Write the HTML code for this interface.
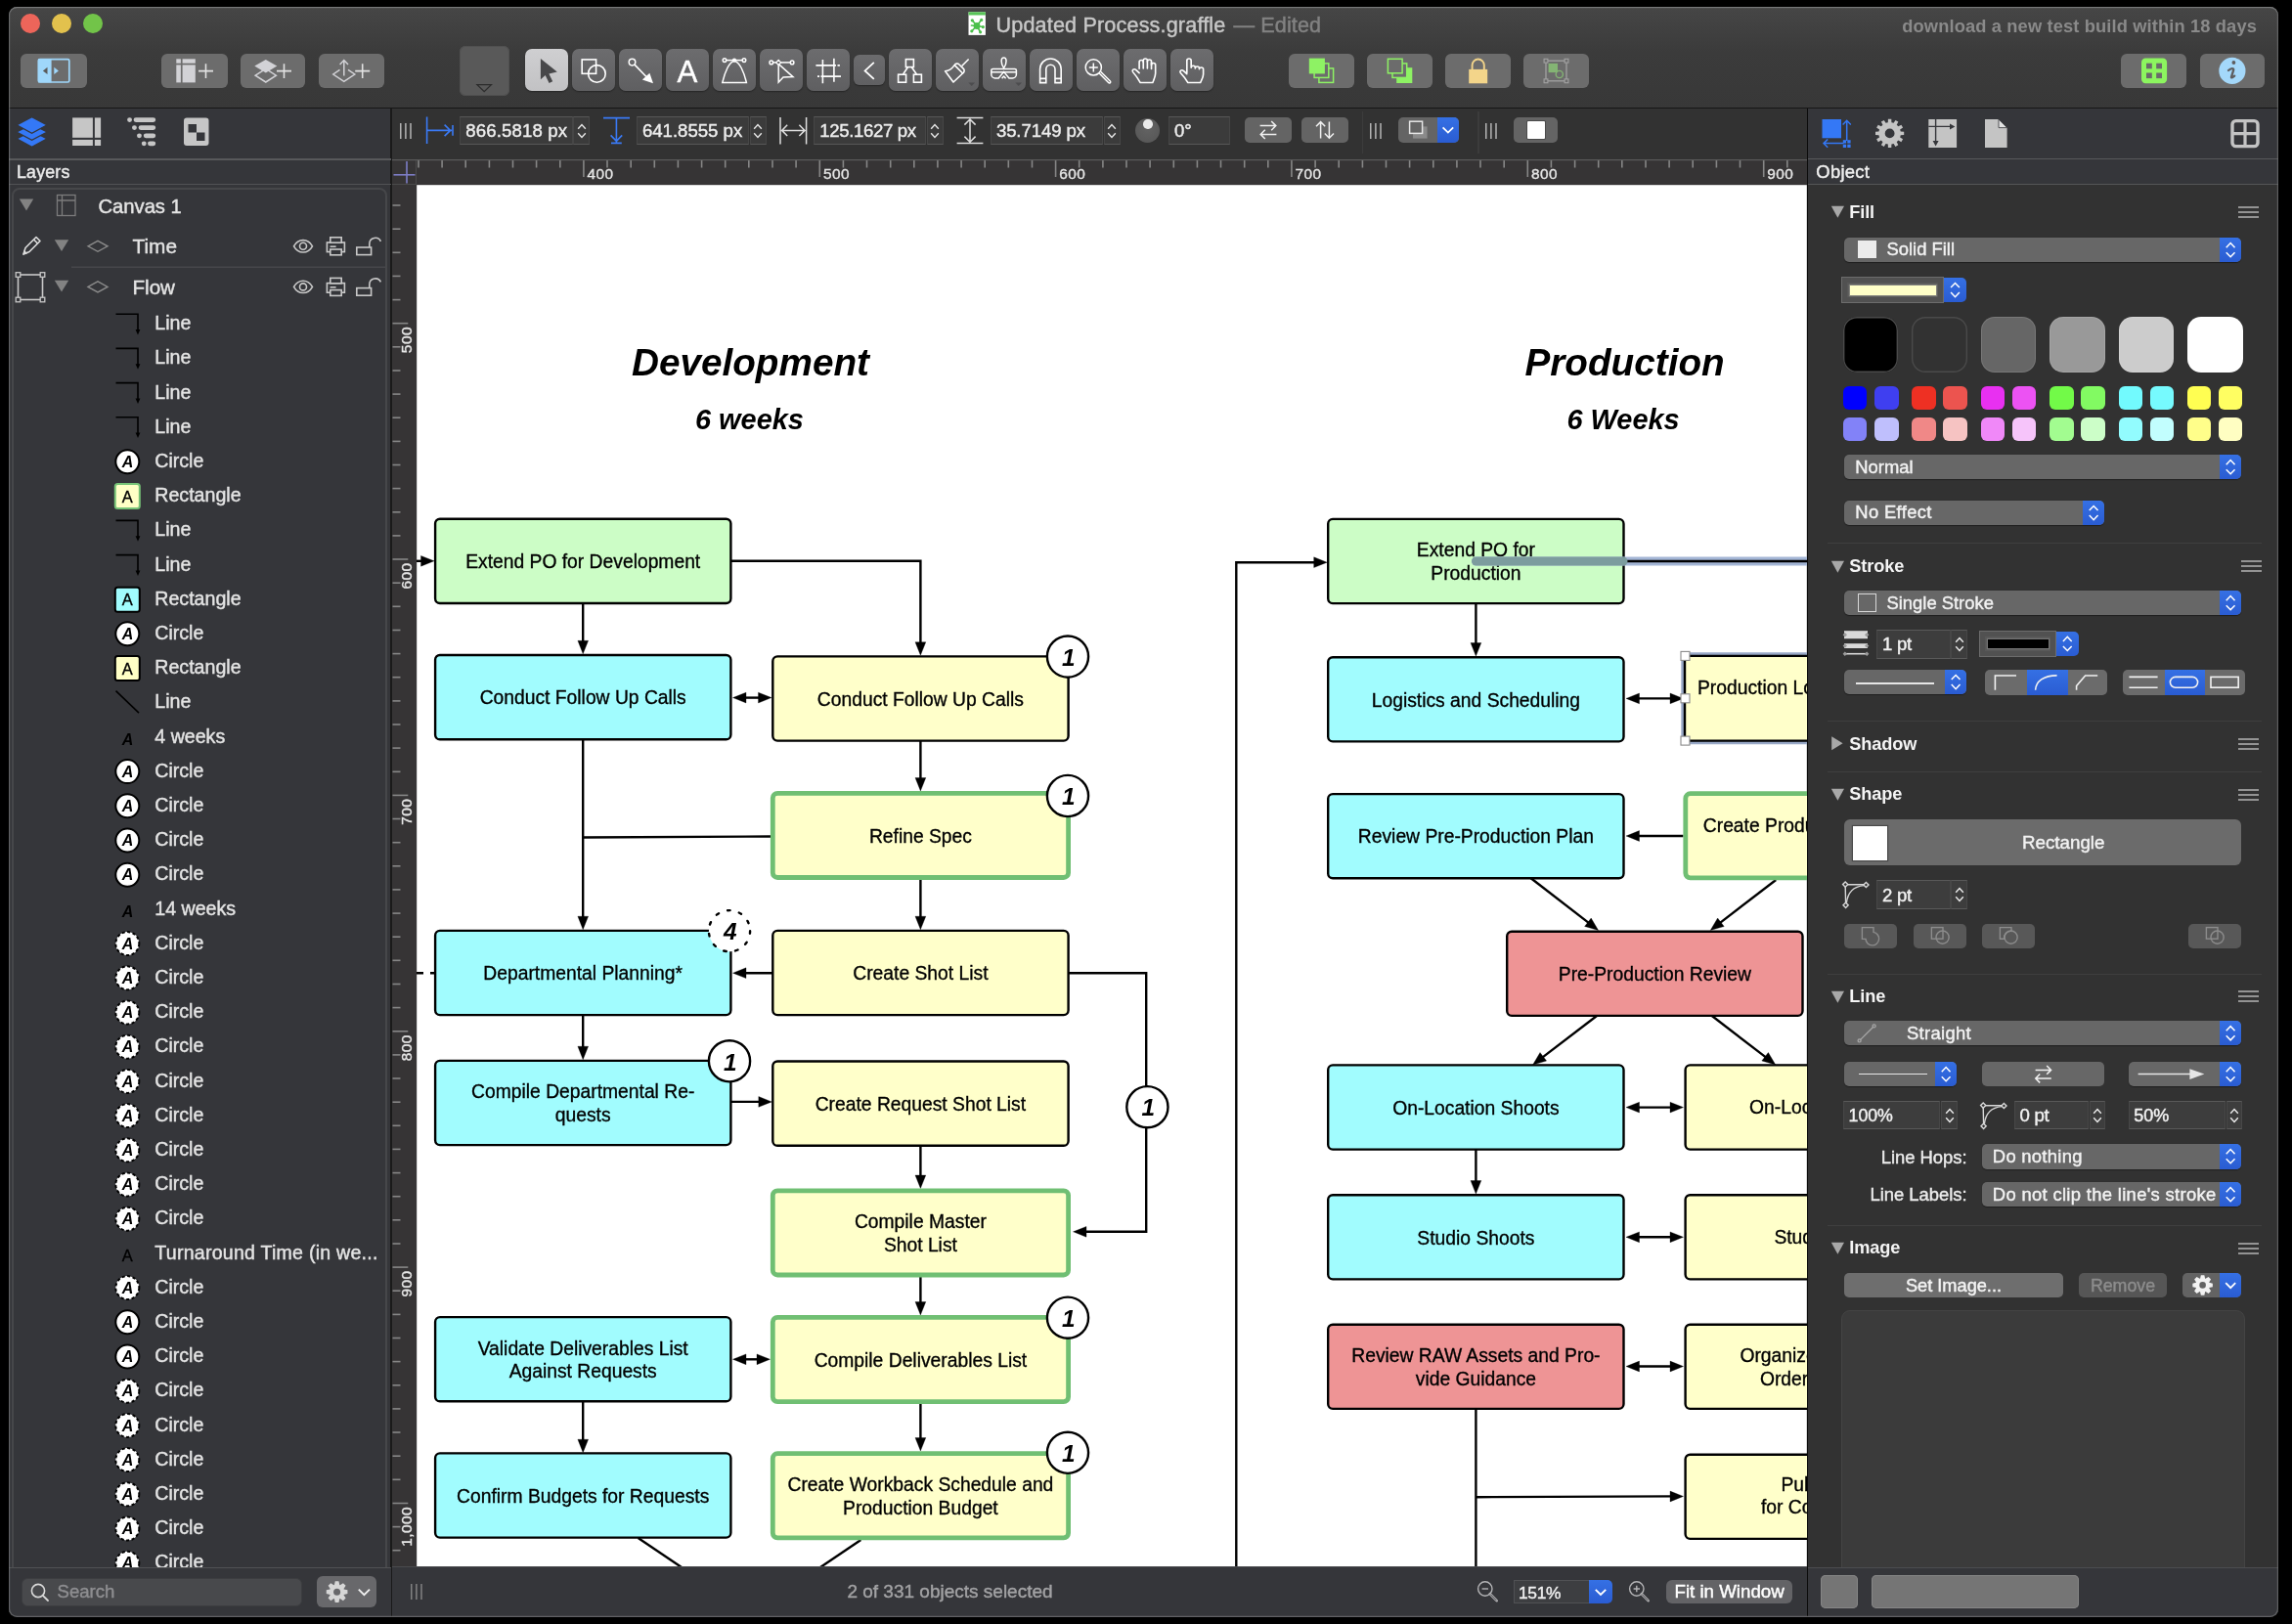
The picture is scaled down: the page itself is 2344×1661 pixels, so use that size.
<!DOCTYPE html><html><head><meta charset="utf-8"><title>Updated Process.graffle</title><style>html,body{margin:0;padding:0;background:#000;}body{width:2344px;height:1661px;position:relative;overflow:hidden;font-family:"Liberation Sans",sans-serif;}#win{position:absolute;left:9px;top:7px;width:2320.5px;height:1647px;border-radius:8.5px;overflow:hidden;background:#323232;}#in{position:absolute;left:-9px;top:-7px;width:2344px;height:1661px;will-change:transform;}#in div,#in svg{position:absolute;}#edge{position:absolute;left:9px;top:7px;width:2320.5px;height:1647px;border-radius:8.5px;box-shadow:inset 0 0 0 1.2px rgba(125,126,128,.6),inset 0 1px 0 0 rgba(150,150,150,.5);pointer-events:none}svg text{font-family:"Liberation Sans",sans-serif;}</style></head><body><div id="win"><div id="in"><svg style="left:426px;top:189px" width="1422" height="1414" viewBox="426 189 1422 1414" font-family="Liberation Sans, sans-serif" font-size="19.3" fill="#000" stroke="#000" stroke-width="0.32"><rect x="426" y="189" width="1422" height="1414" fill="#fff"/><text x="646" y="383.8" font-size="38.7" font-weight="bold" font-style="italic" stroke="none">Development</text><text x="711" y="438.8" font-size="28.9" font-weight="bold" font-style="italic" stroke="none">6 weeks</text><text x="1559.5" y="383.8" font-size="38.7" font-weight="bold" font-style="italic" stroke="none">Production</text><text x="1602.5" y="438.8" font-size="28.9" font-weight="bold" font-style="italic" stroke="none">6 Weeks</text><polyline points="420.0,573.8 436.0,573.8" fill="none" stroke="#000" stroke-width="2.4"/><polygon points="444.0,573.8 430.5,579.2 430.5,568.4" fill="#000"/><polyline points="596.2,617.5 596.2,660.8" fill="none" stroke="#000" stroke-width="2.4"/><polygon points="596.2,668.8 590.9,655.3 601.6,655.3" fill="#000"/><polyline points="748.0,573.8 941.4,573.8 941.4,662.2" fill="none" stroke="#000" stroke-width="2.4"/><polygon points="941.4,670.2 936.0,656.7 946.8,656.7" fill="#000"/><polyline points="757.5,713.6 781.0,713.6" fill="none" stroke="#000" stroke-width="2.4"/><polygon points="789.0,713.6 775.5,719.0 775.5,708.2" fill="#000"/><polygon points="749.5,713.6 763.0,708.2 763.0,719.0" fill="#000"/><polyline points="941.4,758.0 941.4,801.0" fill="none" stroke="#000" stroke-width="2.4"/><polygon points="941.4,809.0 936.0,795.5 946.8,795.5" fill="#000"/><polyline points="596.2,756.0 596.2,942.7" fill="none" stroke="#000" stroke-width="2.4"/><polygon points="596.2,950.7 590.9,937.2 601.6,937.2" fill="#000"/><polyline points="789.0,855.5 596.2,856.5" fill="none" stroke="#000" stroke-width="2.4"/><polyline points="941.4,899.0 941.4,942.7" fill="none" stroke="#000" stroke-width="2.4"/><polygon points="941.4,950.7 936.0,937.2 946.8,937.2" fill="#000"/><polyline points="790.0,995.2 757.5,995.2" fill="none" stroke="#000" stroke-width="2.4"/><polygon points="749.5,995.2 763.0,989.8 763.0,1000.6" fill="#000"/><polyline points="426.0,995.2 444.0,995.2" fill="none" stroke="#000" stroke-width="2.4" stroke-dasharray="7 7"/><polyline points="596.2,1038.0 596.2,1075.7" fill="none" stroke="#000" stroke-width="2.4"/><polygon points="596.2,1083.7 590.9,1070.2 601.6,1070.2" fill="#000"/><polyline points="748.0,1126.9 781.3,1126.9" fill="none" stroke="#000" stroke-width="2.4"/><polygon points="789.3,1126.9 775.8,1132.3 775.8,1121.5" fill="#000"/><polyline points="941.4,1170.0 941.4,1207.5" fill="none" stroke="#000" stroke-width="2.4"/><polygon points="941.4,1215.5 936.0,1202.0 946.8,1202.0" fill="#000"/><polyline points="1093.0,995.2 1172.2,995.2 1172.2,1259.8 1105.5,1259.8" fill="none" stroke="#000" stroke-width="2.4"/><polygon points="1097.5,1259.8 1111.0,1254.4 1111.0,1265.2" fill="#000"/><polyline points="941.4,1304.0 941.4,1337.0" fill="none" stroke="#000" stroke-width="2.4"/><polygon points="941.4,1345.0 936.0,1331.5 946.8,1331.5" fill="#000"/><polyline points="757.5,1390.3 779.5,1390.3" fill="none" stroke="#000" stroke-width="2.4"/><polygon points="787.5,1390.3 774.0,1395.7 774.0,1384.9" fill="#000"/><polygon points="749.5,1390.3 763.0,1384.9 763.0,1395.7" fill="#000"/><polyline points="596.2,1433.0 596.2,1477.7" fill="none" stroke="#000" stroke-width="2.4"/><polygon points="596.2,1485.7 590.9,1472.2 601.6,1472.2" fill="#000"/><polyline points="941.4,1435.0 941.4,1476.0" fill="none" stroke="#000" stroke-width="2.4"/><polygon points="941.4,1484.0 936.0,1470.5 946.8,1470.5" fill="#000"/><polyline points="652.6,1573.0 700.0,1605.0" fill="none" stroke="#000" stroke-width="2.4"/><polyline points="880.4,1575.0 836.0,1605.0" fill="none" stroke="#000" stroke-width="2.4"/><polyline points="1264.3,1605.0 1264.3,575.2 1349.2,575.2" fill="none" stroke="#000" stroke-width="2.4"/><polygon points="1357.2,575.2 1343.7,580.6 1343.7,569.8" fill="#000"/><polyline points="1509.4,617.0 1509.4,663.0" fill="none" stroke="#000" stroke-width="2.4"/><polygon points="1509.4,671.0 1504.0,657.5 1514.8,657.5" fill="#000"/><polyline points="1671.0,714.4 1713.5,714.4" fill="none" stroke="#000" stroke-width="2.4"/><polygon points="1721.5,714.4 1708.0,719.8 1708.0,709.0" fill="#000"/><polygon points="1663.0,714.4 1676.5,709.0 1676.5,719.8" fill="#000"/><polyline points="1721.5,855.0 1671.0,855.0" fill="none" stroke="#000" stroke-width="2.4"/><polygon points="1663.0,855.0 1676.5,849.6 1676.5,860.4" fill="#000"/><polyline points="1565.4,898.0 1628.3,946.6" fill="none" stroke="#000" stroke-width="2.4"/><polygon points="1634.6,951.5 1620.6,947.5 1627.2,939.0" fill="#000"/><polyline points="1816.2,900.0 1755.5,946.6" fill="none" stroke="#000" stroke-width="2.4"/><polygon points="1749.2,951.5 1756.6,939.0 1763.2,947.6" fill="#000"/><polyline points="1634.3,1038.0 1574.0,1084.1" fill="none" stroke="#000" stroke-width="2.4"/><polygon points="1567.6,1089.0 1575.0,1076.5 1581.6,1085.1" fill="#000"/><polyline points="1749.5,1038.0 1809.5,1084.1" fill="none" stroke="#000" stroke-width="2.4"/><polygon points="1815.8,1089.0 1801.8,1085.0 1808.4,1076.5" fill="#000"/><polyline points="1671.0,1132.6 1713.5,1132.6" fill="none" stroke="#000" stroke-width="2.4"/><polygon points="1721.5,1132.6 1708.0,1138.0 1708.0,1127.2" fill="#000"/><polygon points="1663.0,1132.6 1676.5,1127.2 1676.5,1138.0" fill="#000"/><polyline points="1509.4,1175.0 1509.4,1213.0" fill="none" stroke="#000" stroke-width="2.4"/><polygon points="1509.4,1221.0 1504.0,1207.5 1514.8,1207.5" fill="#000"/><polyline points="1671.0,1265.3 1713.5,1265.3" fill="none" stroke="#000" stroke-width="2.4"/><polygon points="1721.5,1265.3 1708.0,1270.7 1708.0,1259.9" fill="#000"/><polygon points="1663.0,1265.3 1676.5,1259.9 1676.5,1270.7" fill="#000"/><polyline points="1671.0,1397.5 1713.5,1397.5" fill="none" stroke="#000" stroke-width="2.4"/><polygon points="1721.5,1397.5 1708.0,1402.9 1708.0,1392.1" fill="#000"/><polygon points="1663.0,1397.5 1676.5,1392.1 1676.5,1402.9" fill="#000"/><polyline points="1509.4,1440.0 1509.4,1605.0" fill="none" stroke="#000" stroke-width="2.4"/><polyline points="1509.4,1531.2 1713.5,1530.4" fill="none" stroke="#000" stroke-width="2.4"/><polygon points="1721.5,1530.4 1708.0,1535.9 1708.0,1525.1" fill="#000"/><rect x="445.1" y="530.8" width="302.3" height="86.2" rx="4.8" fill="#ccfdc6" stroke="#000" stroke-width="2.4"/><text x="596.2" y="581.1" text-anchor="middle">Extend PO for Development</text><rect x="445.1" y="670.0" width="302.3" height="86.2" rx="4.8" fill="#a1fcfe" stroke="#000" stroke-width="2.4"/><text x="596.2" y="720.3" text-anchor="middle">Conduct Follow Up Calls</text><rect x="790.3" y="671.4" width="302.3" height="86.2" rx="4.8" fill="#ffffca" stroke="#000" stroke-width="2.4"/><text x="941.4" y="721.7" text-anchor="middle">Conduct Follow Up Calls</text><rect x="790.3" y="811.3" width="302.3" height="86.2" rx="4.8" fill="#ffffca" stroke="#70bf73" stroke-width="4.8"/><text x="941.4" y="861.6" text-anchor="middle">Refine Spec</text><rect x="445.1" y="951.9" width="302.3" height="86.2" rx="4.8" fill="#a1fcfe" stroke="#000" stroke-width="2.4"/><text x="596.2" y="1002.2" text-anchor="middle">Departmental Planning*</text><rect x="790.3" y="951.9" width="302.3" height="86.2" rx="4.8" fill="#ffffca" stroke="#000" stroke-width="2.4"/><text x="941.4" y="1002.2" text-anchor="middle">Create Shot List</text><rect x="445.1" y="1084.9" width="302.3" height="86.2" rx="4.8" fill="#a1fcfe" stroke="#000" stroke-width="2.4"/><text x="596.2" y="1123.4" text-anchor="middle">Compile Departmental Re-</text><text x="596.2" y="1147.0" text-anchor="middle">quests</text><rect x="790.3" y="1085.5" width="302.3" height="86.2" rx="4.8" fill="#ffffca" stroke="#000" stroke-width="2.4"/><text x="941.4" y="1135.8" text-anchor="middle">Create Request Shot List</text><rect x="790.3" y="1217.8" width="302.3" height="86.2" rx="4.8" fill="#ffffca" stroke="#70bf73" stroke-width="4.8"/><text x="941.4" y="1256.3" text-anchor="middle">Compile Master</text><text x="941.4" y="1279.9" text-anchor="middle">Shot List</text><rect x="445.1" y="1347.1" width="302.3" height="86.2" rx="4.8" fill="#a1fcfe" stroke="#000" stroke-width="2.4"/><text x="596.2" y="1385.6" text-anchor="middle">Validate Deliverables List</text><text x="596.2" y="1409.2" text-anchor="middle">Against Requests</text><rect x="790.3" y="1347.4" width="302.3" height="86.2" rx="4.8" fill="#ffffca" stroke="#70bf73" stroke-width="4.8"/><text x="941.4" y="1397.7" text-anchor="middle">Compile Deliverables List</text><rect x="445.1" y="1486.4" width="302.3" height="86.2" rx="4.8" fill="#a1fcfe" stroke="#000" stroke-width="2.4"/><text x="596.2" y="1536.7" text-anchor="middle">Confirm Budgets for Requests</text><rect x="790.3" y="1486.7" width="302.3" height="86.2" rx="4.8" fill="#ffffca" stroke="#70bf73" stroke-width="4.8"/><text x="941.4" y="1525.2" text-anchor="middle">Create Workback Schedule and</text><text x="941.4" y="1548.8" text-anchor="middle">Production Budget</text><rect x="1358.2" y="530.9" width="302.3" height="86.2" rx="4.8" fill="#ccfdc6" stroke="#000" stroke-width="2.4"/><text x="1509.4" y="569.4" text-anchor="middle">Extend PO for</text><text x="1509.4" y="593.0" text-anchor="middle">Production</text><rect x="1358.2" y="672.2" width="302.3" height="86.2" rx="4.8" fill="#a1fcfe" stroke="#000" stroke-width="2.4"/><text x="1509.4" y="722.5" text-anchor="middle">Logistics and Scheduling</text><rect x="1358.2" y="812.1" width="302.3" height="86.2" rx="4.8" fill="#a1fcfe" stroke="#000" stroke-width="2.4"/><text x="1509.4" y="862.4" text-anchor="middle">Review Pre-Production Plan</text><rect x="1541.2" y="952.7" width="302.3" height="86.2" rx="4.8" fill="#ee9495" stroke="#000" stroke-width="2.4"/><text x="1692.4" y="1003.0" text-anchor="middle">Pre-Production Review</text><rect x="1358.2" y="1089.4" width="302.3" height="86.2" rx="4.8" fill="#a1fcfe" stroke="#000" stroke-width="2.4"/><text x="1509.4" y="1139.7" text-anchor="middle">On-Location Shoots</text><rect x="1358.2" y="1222.2" width="302.3" height="86.2" rx="4.8" fill="#a1fcfe" stroke="#000" stroke-width="2.4"/><text x="1509.4" y="1272.5" text-anchor="middle">Studio Shoots</text><rect x="1358.2" y="1354.7" width="302.3" height="86.2" rx="4.8" fill="#ee9495" stroke="#000" stroke-width="2.4"/><text x="1509.4" y="1393.2" text-anchor="middle">Review RAW Assets and Pro-</text><text x="1509.4" y="1416.8" text-anchor="middle">vide Guidance</text><rect x="1723.0" y="670.9" width="302.3" height="86.7" rx="4.8" fill="none" stroke="#98a8c6" stroke-width="7.4"/><rect x="1723.0" y="670.9" width="302.3" height="86.7" rx="4.8" fill="#ffffca" stroke="#000" stroke-width="2.4"/><text x="1736" y="710.3">Production Logistics and</text><rect x="1723.8" y="811.7" width="302.3" height="86.2" rx="4.8" fill="#ffffca" stroke="#70bf73" stroke-width="4.8"/><text x="1741.8" y="850.6">Create Production Plan and</text><rect x="1723.6" y="1089.4" width="302.3" height="86.2" rx="4.8" fill="#ffffca" stroke="#000" stroke-width="2.4"/><text x="1789.1" y="1139.2">On-Location</text><rect x="1723.6" y="1222.2" width="302.3" height="86.2" rx="4.8" fill="#ffffca" stroke="#000" stroke-width="2.4"/><text x="1814.4" y="1272.3">Studio</text><rect x="1723.6" y="1354.7" width="302.3" height="86.2" rx="4.8" fill="#ffffca" stroke="#000" stroke-width="2.4"/><text x="1779.4" y="1393.2">Organize</text><text x="1799.9" y="1417">Order</text><rect x="1723.6" y="1487.7" width="302.3" height="86.2" rx="4.8" fill="#ffffca" stroke="#000" stroke-width="2.4"/><text x="1821.4" y="1524.6">Pull</text><text x="1800.9" y="1548.4">for Co</text><circle cx="1092.0" cy="671.6" r="21.1" fill="#fff" stroke="#000" stroke-width="2.4"/><text x="1092.9" y="680.8" text-anchor="middle" font-size="24.4" font-weight="bold" font-style="italic" stroke="none">1</text><circle cx="1092.0" cy="814.0" r="21.1" fill="#fff" stroke="#000" stroke-width="2.4"/><text x="1092.9" y="823.2" text-anchor="middle" font-size="24.4" font-weight="bold" font-style="italic" stroke="none">1</text><circle cx="746.0" cy="952.2" r="21.1" fill="#fff" stroke="#000" stroke-width="2.4" stroke-dasharray="2.6 9.5" stroke-linecap="round"/><text x="746.9" y="961.4" text-anchor="middle" font-size="24.4" font-weight="bold" font-style="italic" stroke="none">4</text><circle cx="746.0" cy="1085.3" r="21.1" fill="#fff" stroke="#000" stroke-width="2.4"/><text x="746.9" y="1094.5" text-anchor="middle" font-size="24.4" font-weight="bold" font-style="italic" stroke="none">1</text><circle cx="1173.4" cy="1132.2" r="21.1" fill="#fff" stroke="#000" stroke-width="2.4"/><text x="1174.3" y="1141.4" text-anchor="middle" font-size="24.4" font-weight="bold" font-style="italic" stroke="none">1</text><circle cx="1092.0" cy="1347.7" r="21.1" fill="#fff" stroke="#000" stroke-width="2.4"/><text x="1092.9" y="1356.9" text-anchor="middle" font-size="24.4" font-weight="bold" font-style="italic" stroke="none">1</text><circle cx="1092.0" cy="1485.8" r="21.1" fill="#fff" stroke="#000" stroke-width="2.4"/><text x="1092.9" y="1495.0" text-anchor="middle" font-size="24.4" font-weight="bold" font-style="italic" stroke="none">1</text><line x1="1509.5" y1="574" x2="1850" y2="574" stroke="#a3b5d5" stroke-width="9" stroke-linecap="round"/><line x1="1662" y1="574" x2="1850" y2="574" stroke="#000" stroke-width="2.4"/><line x1="1509.5" y1="574" x2="1660" y2="574" stroke="#7c9c9e" stroke-width="9" stroke-linecap="round"/><rect x="1719.0" y="666.4" width="9" height="9" fill="#fff" stroke="#8a8a8a" stroke-width="1.1"/><rect x="1719.0" y="709.8" width="9" height="9" fill="#fff" stroke="#8a8a8a" stroke-width="1.1"/><rect x="1719.0" y="753.1" width="9" height="9" fill="#fff" stroke="#8a8a8a" stroke-width="1.1"/></svg><div style="left:401px;top:163px;width:1447px;height:26px;background:#363435;border-top:1px solid #5b5b5b;box-sizing:border-box"></div><div style="left:401px;top:189px;width:25px;height:1413px;background:#363435;"></div><svg style="left:0px;top:0px;font-family:Liberation Sans,sans-serif" width="2344" height="1661" viewBox="0 0 2344 1661"><rect x="427.2" y="164" width="1.6" height="7.5" fill="#868686"/><rect x="451.3" y="164" width="1.6" height="7.5" fill="#868686"/><rect x="475.4" y="164" width="1.6" height="7.5" fill="#868686"/><rect x="499.6" y="164" width="1.6" height="7.5" fill="#868686"/><rect x="523.7" y="164" width="1.6" height="7.5" fill="#868686"/><rect x="547.8" y="164" width="1.6" height="7.5" fill="#868686"/><rect x="572.0" y="164" width="1.6" height="7.5" fill="#868686"/><rect x="596.1" y="164" width="1.6" height="17" fill="#868686"/><text x="600.5" y="183.2" font-size="15.4" letter-spacing="0.45" fill="#e6e6e6" stroke="#e6e6e6" stroke-width="0.35">400</text><rect x="620.2" y="164" width="1.6" height="7.5" fill="#868686"/><rect x="644.4" y="164" width="1.6" height="7.5" fill="#868686"/><rect x="668.5" y="164" width="1.6" height="7.5" fill="#868686"/><rect x="692.6" y="164" width="1.6" height="7.5" fill="#868686"/><rect x="716.8" y="164" width="1.6" height="7.5" fill="#868686"/><rect x="740.9" y="164" width="1.6" height="7.5" fill="#868686"/><rect x="765.0" y="164" width="1.6" height="7.5" fill="#868686"/><rect x="789.2" y="164" width="1.6" height="7.5" fill="#868686"/><rect x="813.3" y="164" width="1.6" height="7.5" fill="#868686"/><rect x="837.5" y="164" width="1.6" height="17" fill="#868686"/><text x="841.9" y="183.2" font-size="15.4" letter-spacing="0.45" fill="#e6e6e6" stroke="#e6e6e6" stroke-width="0.35">500</text><rect x="861.6" y="164" width="1.6" height="7.5" fill="#868686"/><rect x="885.7" y="164" width="1.6" height="7.5" fill="#868686"/><rect x="909.9" y="164" width="1.6" height="7.5" fill="#868686"/><rect x="934.0" y="164" width="1.6" height="7.5" fill="#868686"/><rect x="958.1" y="164" width="1.6" height="7.5" fill="#868686"/><rect x="982.3" y="164" width="1.6" height="7.5" fill="#868686"/><rect x="1006.4" y="164" width="1.6" height="7.5" fill="#868686"/><rect x="1030.5" y="164" width="1.6" height="7.5" fill="#868686"/><rect x="1054.7" y="164" width="1.6" height="7.5" fill="#868686"/><rect x="1078.8" y="164" width="1.6" height="17" fill="#868686"/><text x="1083.2" y="183.2" font-size="15.4" letter-spacing="0.45" fill="#e6e6e6" stroke="#e6e6e6" stroke-width="0.35">600</text><rect x="1102.9" y="164" width="1.6" height="7.5" fill="#868686"/><rect x="1127.1" y="164" width="1.6" height="7.5" fill="#868686"/><rect x="1151.2" y="164" width="1.6" height="7.5" fill="#868686"/><rect x="1175.3" y="164" width="1.6" height="7.5" fill="#868686"/><rect x="1199.5" y="164" width="1.6" height="7.5" fill="#868686"/><rect x="1223.6" y="164" width="1.6" height="7.5" fill="#868686"/><rect x="1247.7" y="164" width="1.6" height="7.5" fill="#868686"/><rect x="1271.9" y="164" width="1.6" height="7.5" fill="#868686"/><rect x="1296.0" y="164" width="1.6" height="7.5" fill="#868686"/><rect x="1320.1" y="164" width="1.6" height="17" fill="#868686"/><text x="1324.5" y="183.2" font-size="15.4" letter-spacing="0.45" fill="#e6e6e6" stroke="#e6e6e6" stroke-width="0.35">700</text><rect x="1344.3" y="164" width="1.6" height="7.5" fill="#868686"/><rect x="1368.4" y="164" width="1.6" height="7.5" fill="#868686"/><rect x="1392.6" y="164" width="1.6" height="7.5" fill="#868686"/><rect x="1416.7" y="164" width="1.6" height="7.5" fill="#868686"/><rect x="1440.8" y="164" width="1.6" height="7.5" fill="#868686"/><rect x="1465.0" y="164" width="1.6" height="7.5" fill="#868686"/><rect x="1489.1" y="164" width="1.6" height="7.5" fill="#868686"/><rect x="1513.2" y="164" width="1.6" height="7.5" fill="#868686"/><rect x="1537.4" y="164" width="1.6" height="7.5" fill="#868686"/><rect x="1561.5" y="164" width="1.6" height="17" fill="#868686"/><text x="1565.9" y="183.2" font-size="15.4" letter-spacing="0.45" fill="#e6e6e6" stroke="#e6e6e6" stroke-width="0.35">800</text><rect x="1585.6" y="164" width="1.6" height="7.5" fill="#868686"/><rect x="1609.8" y="164" width="1.6" height="7.5" fill="#868686"/><rect x="1633.9" y="164" width="1.6" height="7.5" fill="#868686"/><rect x="1658.0" y="164" width="1.6" height="7.5" fill="#868686"/><rect x="1682.2" y="164" width="1.6" height="7.5" fill="#868686"/><rect x="1706.3" y="164" width="1.6" height="7.5" fill="#868686"/><rect x="1730.4" y="164" width="1.6" height="7.5" fill="#868686"/><rect x="1754.6" y="164" width="1.6" height="7.5" fill="#868686"/><rect x="1778.7" y="164" width="1.6" height="7.5" fill="#868686"/><rect x="1802.9" y="164" width="1.6" height="17" fill="#868686"/><text x="1807.2" y="183.2" font-size="15.4" letter-spacing="0.45" fill="#e6e6e6" stroke="#e6e6e6" stroke-width="0.35">900</text><rect x="1827.0" y="164" width="1.6" height="7.5" fill="#868686"/><rect x="401.5" y="209.2" width="8" height="1.6" fill="#868686"/><rect x="401.5" y="233.4" width="8" height="1.6" fill="#868686"/><rect x="401.5" y="257.5" width="8" height="1.6" fill="#868686"/><rect x="401.5" y="281.6" width="8" height="1.6" fill="#868686"/><rect x="401.5" y="305.8" width="8" height="1.6" fill="#868686"/><rect x="401.5" y="329.9" width="15.8" height="1.6" fill="#868686"/><text transform="translate(421,334.1) rotate(-90)" text-anchor="end" font-size="15.4" letter-spacing="0.45" fill="#e6e6e6" stroke="#e6e6e6" stroke-width="0.35">500</text><rect x="401.5" y="354.0" width="8" height="1.6" fill="#868686"/><rect x="401.5" y="378.2" width="8" height="1.6" fill="#868686"/><rect x="401.5" y="402.3" width="8" height="1.6" fill="#868686"/><rect x="401.5" y="426.4" width="8" height="1.6" fill="#868686"/><rect x="401.5" y="450.6" width="8" height="1.6" fill="#868686"/><rect x="401.5" y="474.7" width="8" height="1.6" fill="#868686"/><rect x="401.5" y="498.8" width="8" height="1.6" fill="#868686"/><rect x="401.5" y="523.0" width="8" height="1.6" fill="#868686"/><rect x="401.5" y="547.1" width="8" height="1.6" fill="#868686"/><rect x="401.5" y="571.2" width="15.8" height="1.6" fill="#868686"/><text transform="translate(421,575.4) rotate(-90)" text-anchor="end" font-size="15.4" letter-spacing="0.45" fill="#e6e6e6" stroke="#e6e6e6" stroke-width="0.35">600</text><rect x="401.5" y="595.4" width="8" height="1.6" fill="#868686"/><rect x="401.5" y="619.5" width="8" height="1.6" fill="#868686"/><rect x="401.5" y="643.7" width="8" height="1.6" fill="#868686"/><rect x="401.5" y="667.8" width="8" height="1.6" fill="#868686"/><rect x="401.5" y="691.9" width="8" height="1.6" fill="#868686"/><rect x="401.5" y="716.1" width="8" height="1.6" fill="#868686"/><rect x="401.5" y="740.2" width="8" height="1.6" fill="#868686"/><rect x="401.5" y="764.3" width="8" height="1.6" fill="#868686"/><rect x="401.5" y="788.5" width="8" height="1.6" fill="#868686"/><rect x="401.5" y="812.6" width="15.8" height="1.6" fill="#868686"/><text transform="translate(421,816.8) rotate(-90)" text-anchor="end" font-size="15.4" letter-spacing="0.45" fill="#e6e6e6" stroke="#e6e6e6" stroke-width="0.35">700</text><rect x="401.5" y="836.7" width="8" height="1.6" fill="#868686"/><rect x="401.5" y="860.9" width="8" height="1.6" fill="#868686"/><rect x="401.5" y="885.0" width="8" height="1.6" fill="#868686"/><rect x="401.5" y="909.1" width="8" height="1.6" fill="#868686"/><rect x="401.5" y="933.3" width="8" height="1.6" fill="#868686"/><rect x="401.5" y="957.4" width="8" height="1.6" fill="#868686"/><rect x="401.5" y="981.5" width="8" height="1.6" fill="#868686"/><rect x="401.5" y="1005.7" width="8" height="1.6" fill="#868686"/><rect x="401.5" y="1029.8" width="8" height="1.6" fill="#868686"/><rect x="401.5" y="1054.0" width="15.8" height="1.6" fill="#868686"/><text transform="translate(421,1058.2) rotate(-90)" text-anchor="end" font-size="15.4" letter-spacing="0.45" fill="#e6e6e6" stroke="#e6e6e6" stroke-width="0.35">800</text><rect x="401.5" y="1078.1" width="8" height="1.6" fill="#868686"/><rect x="401.5" y="1102.2" width="8" height="1.6" fill="#868686"/><rect x="401.5" y="1126.4" width="8" height="1.6" fill="#868686"/><rect x="401.5" y="1150.5" width="8" height="1.6" fill="#868686"/><rect x="401.5" y="1174.6" width="8" height="1.6" fill="#868686"/><rect x="401.5" y="1198.8" width="8" height="1.6" fill="#868686"/><rect x="401.5" y="1222.9" width="8" height="1.6" fill="#868686"/><rect x="401.5" y="1247.0" width="8" height="1.6" fill="#868686"/><rect x="401.5" y="1271.2" width="8" height="1.6" fill="#868686"/><rect x="401.5" y="1295.3" width="15.8" height="1.6" fill="#868686"/><text transform="translate(421,1299.5) rotate(-90)" text-anchor="end" font-size="15.4" letter-spacing="0.45" fill="#e6e6e6" stroke="#e6e6e6" stroke-width="0.35">900</text><rect x="401.5" y="1319.4" width="8" height="1.6" fill="#868686"/><rect x="401.5" y="1343.6" width="8" height="1.6" fill="#868686"/><rect x="401.5" y="1367.7" width="8" height="1.6" fill="#868686"/><rect x="401.5" y="1391.8" width="8" height="1.6" fill="#868686"/><rect x="401.5" y="1416.0" width="8" height="1.6" fill="#868686"/><rect x="401.5" y="1440.1" width="8" height="1.6" fill="#868686"/><rect x="401.5" y="1464.2" width="8" height="1.6" fill="#868686"/><rect x="401.5" y="1488.4" width="8" height="1.6" fill="#868686"/><rect x="401.5" y="1512.5" width="8" height="1.6" fill="#868686"/><rect x="401.5" y="1536.7" width="15.8" height="1.6" fill="#868686"/><text transform="translate(421,1540.9) rotate(-90)" text-anchor="end" font-size="15.4" letter-spacing="0.45" fill="#e6e6e6" stroke="#e6e6e6" stroke-width="0.35">1,000</text><rect x="401.5" y="1560.8" width="8" height="1.6" fill="#868686"/><rect x="401.5" y="1584.9" width="8" height="1.6" fill="#868686"/><rect x="401" y="163" width="25" height="26" fill="#363435"/><rect x="401" y="163" width="1447" height="1.2" fill="#5b5b5b"/><rect x="415.2" y="165" width="1.6" height="22.5" fill="#7d7dc6"/><rect x="402.5" y="178" width="22" height="1.6" fill="#7d7dc6"/><rect x="425" y="164" width="1" height="25" fill="#4a4a4a"/><rect x="401" y="188" width="25" height="1" fill="#4a4a4a"/></svg><div style="left:401px;top:111px;width:1447px;height:52px;background:#323232"></div><svg style="left:408.6px;top:125.8px;" width="12" height="16" viewBox="0 0 12 16"><path d="M0.8,0 V16 M5.9,0 V16 M11,0 V16" stroke="#c8c8c8" stroke-width="1.3"/></svg><svg style="left:434px;top:118px;" width="32" height="32" viewBox="0 0 32 32"><g fill="none" stroke="#3a7af5" stroke-width="1.6"><path d="M2.6,1.6 V29 M2.6,15.4 H28 M20.6,9.6 L26.6,15.4 L20.6,21.2 M29,10 V20.8"/></g></svg><div style="left:470.2px;top:119px;width:115.6px;height:29px;background:#3b3b3b;border:1px solid;border-color:#575757 #464646 #575757 #464646;box-sizing:border-box"></div><div style="left:586.3px;top:119px;width:17px;height:29px;background:#3b3b3b;border:1px solid;border-color:#575757 #464646 #575757 #464646;box-sizing:border-box"></div><svg style="left:588.85px;top:123.5px;" width="12" height="20" viewBox="0 0 12 20"><path d="M2.2,7.8 L6,3.6 L9.8,7.8 M2.2,12.2 L6,16.4 L9.8,12.2" fill="none" stroke="#e6e6e6" stroke-width="1.4"/></svg><div style="left:476.2px;top:125.00px;font-size:18.6px;line-height:18.6px;color:#ededed;white-space:nowrap;letter-spacing:0.15px;-webkit-text-stroke:0.42px">866.5818 px</div><svg style="left:615px;top:118px;" width="32" height="32" viewBox="0 0 32 32"><g fill="none" stroke="#3a7af5" stroke-width="1.6"><path d="M2,2.6 H29 M15.4,2.6 V27.4 M9.6,20.4 L15.4,26.4 L21.2,20.4 M10,28.4 H20.8"/></g></svg><div style="left:650.9px;top:119px;width:115.5px;height:29px;background:#3b3b3b;border:1px solid;border-color:#575757 #464646 #575757 #464646;box-sizing:border-box"></div><div style="left:766.9px;top:119px;width:17px;height:29px;background:#3b3b3b;border:1px solid;border-color:#575757 #464646 #575757 #464646;box-sizing:border-box"></div><svg style="left:769.45px;top:123.5px;" width="12" height="20" viewBox="0 0 12 20"><path d="M2.2,7.8 L6,3.6 L9.8,7.8 M2.2,12.2 L6,16.4 L9.8,12.2" fill="none" stroke="#e6e6e6" stroke-width="1.4"/></svg><div style="left:656.9px;top:125.00px;font-size:18.6px;line-height:18.6px;color:#ededed;white-space:nowrap;letter-spacing:0px;-webkit-text-stroke:0.42px">641.8555 px</div><svg style="left:795px;top:118px;" width="32" height="32" viewBox="0 0 32 32"><g fill="none" stroke="#dedede" stroke-width="1.5"><path d="M3,2 V29.5 M29.6,2 V29.5 M4.5,15.4 H28 M10.2,9.8 L4.6,15.4 L10.2,21 M22.4,9.8 L28,15.4 L22.4,21"/></g></svg><div style="left:832.2px;top:119px;width:115.2px;height:29px;background:#3b3b3b;border:1px solid;border-color:#575757 #464646 #575757 #464646;box-sizing:border-box"></div><div style="left:947.9px;top:119px;width:17px;height:29px;background:#3b3b3b;border:1px solid;border-color:#575757 #464646 #575757 #464646;box-sizing:border-box"></div><svg style="left:950.45px;top:123.5px;" width="12" height="20" viewBox="0 0 12 20"><path d="M2.2,7.8 L6,3.6 L9.8,7.8 M2.2,12.2 L6,16.4 L9.8,12.2" fill="none" stroke="#e6e6e6" stroke-width="1.4"/></svg><div style="left:838.2px;top:125.00px;font-size:18.6px;line-height:18.6px;color:#ededed;white-space:nowrap;letter-spacing:-0.36px;-webkit-text-stroke:0.42px">125.1627 px</div><svg style="left:976px;top:118px;" width="32" height="32" viewBox="0 0 32 32"><g fill="none" stroke="#dedede" stroke-width="1.5"><path d="M2.6,2.4 H29.4 M2.6,28.6 H29.4 M16,3.8 V27.2 M10.4,9.6 L16,4 L21.6,9.6 M10.4,21.6 L16,27.2 L21.6,21.6"/></g></svg><div style="left:1012.9px;top:119px;width:115.5px;height:29px;background:#3b3b3b;border:1px solid;border-color:#575757 #464646 #575757 #464646;box-sizing:border-box"></div><div style="left:1128.9px;top:119px;width:17px;height:29px;background:#3b3b3b;border:1px solid;border-color:#575757 #464646 #575757 #464646;box-sizing:border-box"></div><svg style="left:1131.45px;top:123.5px;" width="12" height="20" viewBox="0 0 12 20"><path d="M2.2,7.8 L6,3.6 L9.8,7.8 M2.2,12.2 L6,16.4 L9.8,12.2" fill="none" stroke="#e6e6e6" stroke-width="1.4"/></svg><div style="left:1018.9px;top:125.00px;font-size:18.6px;line-height:18.6px;color:#ededed;white-space:nowrap;letter-spacing:-0.1px;-webkit-text-stroke:0.42px">35.7149 px</div><div style="left:1160.9px;top:120.7px;width:25.6px;height:25.6px;background:radial-gradient(circle at 50% 40%,#636363,#555);border-radius:50%"></div><div style="left:1169.2px;top:122.3px;width:9.4px;height:9.4px;background:#ececec;border-radius:50%"></div><div style="left:1194.9px;top:119px;width:63.3px;height:29px;background:#3b3b3b;border:1px solid;border-color:#575757 #464646 #575757 #464646;box-sizing:border-box"></div><div style="left:1200.9px;top:125.00px;font-size:18.6px;line-height:18.6px;color:#ededed;white-space:nowrap;letter-spacing:0px;-webkit-text-stroke:0.42px">0°</div><div style="left:1273px;top:120.3px;width:48px;height:25.7px;background:#646464;border-radius:5px"></div><svg style="left:1273px;top:120.3px;" width="48" height="25.7" viewBox="0 0 48 25.7"><g fill="none" stroke="#f0f0f0" stroke-width="1.5"><path d="M15.6,8.6 H31.8 M27.2,4 L31.8,8.6 L27.2,13.2 M32.4,17.4 H16.2 M20.8,12.8 L16.2,17.4 L20.8,22"/></g></svg><div style="left:1330.8px;top:120.3px;width:48px;height:25.7px;background:#646464;border-radius:5px"></div><svg style="left:1330.8px;top:120.3px;" width="48" height="25.7" viewBox="0 0 48 25.7"><g fill="none" stroke="#f0f0f0" stroke-width="1.5"><path d="M19.6,21.4 V4.6 M15,9.2 L19.6,4.6 L24.2,9.2 M28.4,4.4 V21.2 M23.8,16.6 L28.4,21.2 L33,16.6"/></g></svg><div style="left:1393.3px;top:114px;width:1.2px;height:43px;background:#3c3c3c"></div><svg style="left:1401px;top:125.8px;" width="12" height="16" viewBox="0 0 12 16"><path d="M0.8,0 V16 M5.9,0 V16 M11,0 V16" stroke="#c8c8c8" stroke-width="1.3"/></svg><div style="left:1430px;top:120.3px;width:62px;height:25.7px;background:#646464;border-radius:5px"></div><div style="left:1469.8px;top:120.3px;width:22.2px;height:25.7px;background:linear-gradient(#3570e4,#2a5cd2);border-radius:0 5px 5px 0"></div><svg style="left:1430px;top:120.3px;" width="62" height="25.7" viewBox="0 0 62 25.7"><rect x="15" y="9.4" width="14.6" height="12.2" fill="#8a8a8a"/><rect x="11.6" y="4.2" width="13" height="12.2" fill="#646464" stroke="#e6e6e6" stroke-width="1.5"/><path d="M45.6,10.4 L50.9,15.6 L56.2,10.4" fill="none" stroke="#fff" stroke-width="1.8"/></svg><div style="left:1511.4px;top:114px;width:1.2px;height:43px;background:#3c3c3c"></div><svg style="left:1519.4px;top:125.8px;" width="12" height="16" viewBox="0 0 12 16"><path d="M0.8,0 V16 M5.9,0 V16 M11,0 V16" stroke="#c8c8c8" stroke-width="1.3"/></svg><div style="left:1548px;top:119.8px;width:45px;height:25.8px;background:#646464;border-radius:5px"></div><div style="left:1562.3px;top:124px;width:18px;height:17.8px;background:#fff;box-shadow:0 0 0 1px #4a4a4a;border-radius:1px"></div><div style="left:401px;top:1602px;width:1447px;height:53px;background:#35363a;border-top:1px solid #4a4b4e;box-sizing:border-box"></div><svg style="left:419.6px;top:1620.4px;" width="12" height="16" viewBox="0 0 12 16"><path d="M0.8,0 V16 M5.9,0 V16 M11,0 V16" stroke="#8e8e8e" stroke-width="1.3"/></svg><div style="left:471.5px;width:1000px;text-align:center;top:1618.00px;font-size:19px;line-height:19px;color:#a2a2a4;white-space:nowrap;;-webkit-text-stroke:0.42px">2 of 331 objects selected</div><svg style="left:1508.6px;top:1616px;" width="24" height="24" viewBox="0 0 24 24"><circle cx="9.8" cy="9" r="7.2" fill="none" stroke="#b4b4b6" stroke-width="1.4"/><path d="M6.6,9 h6.4" stroke="#b4b4b6" stroke-width="1.4"/><path d="M14.8,14.2 L21.6,21.2" stroke="#b4b4b6" stroke-width="2.6" stroke-linecap="round"/><path d="M15.4,14.8 L21,20.6" stroke="#35363a" stroke-width="0.9" stroke-linecap="round"/></svg><div style="left:1548px;top:1615.7px;width:77.5px;height:24.5px;background:#3d3e41;border:1px solid #505154;box-sizing:border-box"></div><div style="left:1553px;top:1621.00px;font-size:17.4px;line-height:17.4px;color:#f0f0f0;white-space:nowrap;letter-spacing:-0.35px;-webkit-text-stroke:0.42px">151%</div><div style="left:1625.3px;top:1615.7px;width:23.8px;height:24.5px;background:linear-gradient(#3570e4,#2a5cd2);border-radius:0 5px 5px 0"></div><svg style="left:1625.3px;top:1615.7px;" width="23.8" height="24.5" viewBox="0 0 23.8 24.5"><path d="M6.8,9.8 L12,15 L17.2,9.8" fill="none" stroke="#fff" stroke-width="1.9"/></svg><svg style="left:1664.2px;top:1616px;" width="24" height="24" viewBox="0 0 24 24"><circle cx="9.8" cy="9" r="7.2" fill="none" stroke="#b4b4b6" stroke-width="1.4"/><path d="M6.6,9 h6.4 M9.8,5.8 v6.4" stroke="#b4b4b6" stroke-width="1.4"/><path d="M14.8,14.2 L21.6,21.2" stroke="#b4b4b6" stroke-width="2.6" stroke-linecap="round"/><path d="M15.4,14.8 L21,20.6" stroke="#35363a" stroke-width="0.9" stroke-linecap="round"/></svg><div style="left:1704.2px;top:1615.7px;width:128.8px;height:24.5px;background:#636366;border-radius:6px"></div><div style="left:1268.6px;width:1000px;text-align:center;top:1619.00px;font-size:18.7px;line-height:18.7px;color:#fff;white-space:nowrap;;-webkit-text-stroke:0.42px">Fit in Window</div><div style="left:9px;top:111px;width:391px;height:1543px;background:#35363a"></div><div style="left:399.3px;top:111px;width:1.7px;height:1542px;background:#1a1a1a"></div><div style="left:9px;top:162.2px;width:391px;height:1.5px;background:#58595b"></div><div style="left:9px;top:188px;width:391px;height:1.2px;background:#515254"></div><div style="left:12px;top:192.4px;width:384px;height:1420px;border:2.4px solid #46474a;border-radius:8px;box-sizing:border-box;"></div><div style="left:9px;top:1603px;width:391px;height:52px;background:#35363a;border-top:1.2px solid #515254;box-sizing:border-box"></div><div style="left:14px;top:194px;width:380px;height:1409px;overflow:hidden"><div style="left:-14px;top:-194px;width:400px;height:1661px"><svg style="left:0px;top:0px;font-family:Liberation Sans,sans-serif" width="400" height="1661" viewBox="0 0 400 1661"><g fill="#3478f6" stroke="#35363a" stroke-width="1.3"><path d="M17,141.9 L32.6,134 L48.2,141.9 L32.6,150.2z"/><path d="M17,135 L32.6,127.1 L48.2,135 L32.6,143.3z"/><path d="M17,127.8 L32.6,119.6 L48.2,127.8 L32.6,136.2z"/></g><g fill="#c6c6c6"><rect x="74.1" y="120.4" width="20.8" height="20.4"/><rect x="96.9" y="120.4" width="6.2" height="20.4"/><rect x="74.1" y="142.9" width="20.8" height="6.1"/><rect x="96.9" y="142.9" width="6.2" height="6.1"/></g><g fill="none" stroke="#c6c6c6" stroke-width="4.8" stroke-linecap="round"><path d="M132.5,122.6 h0.1 M139,122.6 h17.8 M137.4,130.6 h0.1 M144,130.6 h12.8 M142.4,138.8 h0.1 M149.2,138.8 h7.6 M147.2,146.8 h0.1 M153.4,146.8 h3.4"/></g><rect x="188" y="120.5" width="25.5" height="28.5" rx="3" fill="#c6c6c6"/><rect x="192.5" y="127" width="8.5" height="8.5" fill="#35363a"/><rect x="201" y="135.5" width="8.5" height="8.5" fill="#35363a"/><path d="M19.8,203.6 h14.4 l-7.2,11.9z" fill="#828282"/><g fill="none" stroke="#7c7c7c" stroke-width="1.3"><rect x="58.5" y="199.5" width="18.5" height="21"/><path d="M58.5,205 h18.5 M63.5,199.5 v21"/></g><g fill="none" stroke="#dcdcdc" stroke-width="1.6" stroke-linejoin="round"><path d="M24,260 l2,-6.5 l11,-11 l4,4 l-11,11z"/><path d="M34.5,245 l4,4"/></g><path d="M23.2,260.8 l1.6,-5 l3.4,3.4z" fill="#dcdcdc"/><path d="M55.8,245.2 h14.4 l-7.2,11.9z" fill="#828282"/><path d="M55.8,286.7 h14.4 l-7.2,11.9z" fill="#828282"/><path d="M90,251.8 l10,-5.5 l10,5.5 l-10,5.5z" fill="none" stroke="#8a8a8a" stroke-width="1.4"/><path d="M300.5,251.8 C305.0,243.60000000000002 315.0,243.60000000000002 319.5,251.8 C315.0,260.0 305.0,260.0 300.5,251.8z" fill="none" stroke="#c8c8c8" stroke-width="1.6"/><circle cx="310.0" cy="251.8" r="3.5" fill="none" stroke="#c8c8c8" stroke-width="1.6"/><g fill="none" stroke="#c8c8c8" stroke-width="1.6"><rect x="334.40000000000003" y="248.0" width="18" height="9.6"/><rect x="337.8" y="242.8" width="11.4" height="5.4" fill="#35363a"/><rect x="337.8" y="255.0" width="11.4" height="5.8" fill="#35363a"/><path d="M337.6,252.20000000000002 h6"/></g><g fill="none" stroke="#c8c8c8" stroke-width="1.6"><rect x="364.8" y="253.0" width="14.8" height="7.6"/><path d="M377.8,253.0 v-3.6 a6.1,6.1 0 0 1 11.6,-2.6"/></g><path d="M90,293.4 l10,-5.5 l10,5.5 l-10,5.5z" fill="none" stroke="#8a8a8a" stroke-width="1.4"/><path d="M300.5,293.4 C305.0,285.2 315.0,285.2 319.5,293.4 C315.0,301.59999999999997 305.0,301.59999999999997 300.5,293.4z" fill="none" stroke="#c8c8c8" stroke-width="1.6"/><circle cx="310.0" cy="293.4" r="3.5" fill="none" stroke="#c8c8c8" stroke-width="1.6"/><g fill="none" stroke="#c8c8c8" stroke-width="1.6"><rect x="334.40000000000003" y="289.59999999999997" width="18" height="9.6"/><rect x="337.8" y="284.4" width="11.4" height="5.4" fill="#35363a"/><rect x="337.8" y="296.59999999999997" width="11.4" height="5.8" fill="#35363a"/><path d="M337.6,293.79999999999995 h6"/></g><g fill="none" stroke="#c8c8c8" stroke-width="1.6"><rect x="364.8" y="294.59999999999997" width="14.8" height="7.6"/><path d="M377.8,294.59999999999997 v-3.6 a6.1,6.1 0 0 1 11.6,-2.6"/></g><g fill="none" stroke="#c8c8c8" stroke-width="1.6"><rect x="18.5" y="281" width="25" height="25.5"/></g><rect x="16.2" y="278.7" width="4.6" height="4.6" fill="#35363a" stroke="#c8c8c8" stroke-width="1.3"/><rect x="41.2" y="278.7" width="4.6" height="4.6" fill="#35363a" stroke="#c8c8c8" stroke-width="1.3"/><rect x="16.2" y="304.2" width="4.6" height="4.6" fill="#35363a" stroke="#c8c8c8" stroke-width="1.3"/><rect x="41.2" y="304.2" width="4.6" height="4.6" fill="#35363a" stroke="#c8c8c8" stroke-width="1.3"/><rect x="73" y="272.6" width="321" height="1.2" fill="#4c4d50"/><path d="M118.5,321.2 H141 V338.5" fill="none" stroke="#000" stroke-width="1.6"/><path d="M138.6,337.0 h4.8 l-2.4,5.5z" fill="#000"/><path d="M118.5,356.4 H141 V373.7" fill="none" stroke="#000" stroke-width="1.6"/><path d="M138.6,372.2 h4.8 l-2.4,5.5z" fill="#000"/><path d="M118.5,391.6 H141 V408.9" fill="none" stroke="#000" stroke-width="1.6"/><path d="M138.6,407.4 h4.8 l-2.4,5.5z" fill="#000"/><path d="M118.5,426.8 H141 V444.1" fill="none" stroke="#000" stroke-width="1.6"/><path d="M138.6,442.6 h4.8 l-2.4,5.5z" fill="#000"/><circle cx="130.3" cy="472.3" r="12" fill="#fff" stroke="#000" stroke-width="2"/><text x="130.6" y="477.9" text-anchor="middle" font-size="16" font-weight="bold" font-style="italic" fill="#000">A</text><rect x="117.8" y="495.1" width="25" height="25" rx="2.5" fill="#ffffc6" stroke="#77c477" stroke-width="2"/><text x="130.3" y="513.8" text-anchor="middle" font-size="16.4" fill="#000" stroke="#000" stroke-width="0.35">A</text><path d="M118.5,532.4 H141 V549.7" fill="none" stroke="#000" stroke-width="1.6"/><path d="M138.6,548.2 h4.8 l-2.4,5.5z" fill="#000"/><path d="M118.5,567.6 H141 V584.9" fill="none" stroke="#000" stroke-width="1.6"/><path d="M138.6,583.4 h4.8 l-2.4,5.5z" fill="#000"/><rect x="117.8" y="600.7" width="25" height="25" rx="2.5" fill="#a1fcfe" stroke="#000" stroke-width="2"/><text x="130.3" y="619.4" text-anchor="middle" font-size="16.4" fill="#000" stroke="#000" stroke-width="0.35">A</text><circle cx="130.3" cy="648.3" r="12" fill="#fff" stroke="#000" stroke-width="2"/><text x="130.6" y="653.9" text-anchor="middle" font-size="16" font-weight="bold" font-style="italic" fill="#000">A</text><rect x="117.8" y="671.1" width="25" height="25" rx="2.5" fill="#ffffc6" stroke="#000" stroke-width="2"/><text x="130.3" y="689.8" text-anchor="middle" font-size="16.4" fill="#000" stroke="#000" stroke-width="0.35">A</text><path d="M118.5,706.7 L142,729.2" fill="none" stroke="#000" stroke-width="1.6"/><text x="130.6" y="761.9" text-anchor="middle" font-size="16" font-weight="bold" font-style="italic" fill="#000">A</text><circle cx="130.3" cy="789.1" r="12" fill="#fff" stroke="#000" stroke-width="2"/><text x="130.6" y="794.7" text-anchor="middle" font-size="16" font-weight="bold" font-style="italic" fill="#000">A</text><circle cx="130.3" cy="824.3" r="12" fill="#fff" stroke="#000" stroke-width="2"/><text x="130.6" y="829.9" text-anchor="middle" font-size="16" font-weight="bold" font-style="italic" fill="#000">A</text><circle cx="130.3" cy="859.5" r="12" fill="#fff" stroke="#000" stroke-width="2"/><text x="130.6" y="865.1" text-anchor="middle" font-size="16" font-weight="bold" font-style="italic" fill="#000">A</text><circle cx="130.3" cy="894.7" r="12" fill="#fff" stroke="#000" stroke-width="2"/><text x="130.6" y="900.3" text-anchor="middle" font-size="16" font-weight="bold" font-style="italic" fill="#000">A</text><text x="130.6" y="937.9" text-anchor="middle" font-size="16" font-weight="bold" font-style="italic" fill="#000">A</text><circle cx="130.3" cy="965.1" r="12" fill="#fff" stroke="#000" stroke-width="2" stroke-dasharray="3.2 2.4"/><text x="130.6" y="970.7" text-anchor="middle" font-size="16" font-weight="bold" font-style="italic" fill="#000">A</text><circle cx="130.3" cy="1000.3" r="12" fill="#fff" stroke="#000" stroke-width="2" stroke-dasharray="3.2 2.4"/><text x="130.6" y="1005.9" text-anchor="middle" font-size="16" font-weight="bold" font-style="italic" fill="#000">A</text><circle cx="130.3" cy="1035.5" r="12" fill="#fff" stroke="#000" stroke-width="2" stroke-dasharray="3.2 2.4"/><text x="130.6" y="1041.1" text-anchor="middle" font-size="16" font-weight="bold" font-style="italic" fill="#000">A</text><circle cx="130.3" cy="1070.7" r="12" fill="#fff" stroke="#000" stroke-width="2" stroke-dasharray="3.2 2.4"/><text x="130.6" y="1076.3" text-anchor="middle" font-size="16" font-weight="bold" font-style="italic" fill="#000">A</text><circle cx="130.3" cy="1105.9" r="12" fill="#fff" stroke="#000" stroke-width="2" stroke-dasharray="3.2 2.4"/><text x="130.6" y="1111.5" text-anchor="middle" font-size="16" font-weight="bold" font-style="italic" fill="#000">A</text><circle cx="130.3" cy="1141.1" r="12" fill="#fff" stroke="#000" stroke-width="2" stroke-dasharray="3.2 2.4"/><text x="130.6" y="1146.7" text-anchor="middle" font-size="16" font-weight="bold" font-style="italic" fill="#000">A</text><circle cx="130.3" cy="1176.3" r="12" fill="#fff" stroke="#000" stroke-width="2" stroke-dasharray="3.2 2.4"/><text x="130.6" y="1181.9" text-anchor="middle" font-size="16" font-weight="bold" font-style="italic" fill="#000">A</text><circle cx="130.3" cy="1211.5" r="12" fill="#fff" stroke="#000" stroke-width="2" stroke-dasharray="3.2 2.4"/><text x="130.6" y="1217.1" text-anchor="middle" font-size="16" font-weight="bold" font-style="italic" fill="#000">A</text><circle cx="130.3" cy="1246.7" r="12" fill="#fff" stroke="#000" stroke-width="2" stroke-dasharray="3.2 2.4"/><text x="130.6" y="1252.3" text-anchor="middle" font-size="16" font-weight="bold" font-style="italic" fill="#000">A</text><text x="130.3" y="1289.9" text-anchor="middle" font-size="16.4" fill="#000" stroke="#000" stroke-width="0.35">A</text><circle cx="130.3" cy="1317.1" r="12" fill="#fff" stroke="#000" stroke-width="2" stroke-dasharray="3.2 2.4"/><text x="130.6" y="1322.7" text-anchor="middle" font-size="16" font-weight="bold" font-style="italic" fill="#000">A</text><circle cx="130.3" cy="1352.3" r="12" fill="#fff" stroke="#000" stroke-width="2"/><text x="130.6" y="1357.9" text-anchor="middle" font-size="16" font-weight="bold" font-style="italic" fill="#000">A</text><circle cx="130.3" cy="1387.5" r="12" fill="#fff" stroke="#000" stroke-width="2"/><text x="130.6" y="1393.1" text-anchor="middle" font-size="16" font-weight="bold" font-style="italic" fill="#000">A</text><circle cx="130.3" cy="1422.7" r="12" fill="#fff" stroke="#000" stroke-width="2" stroke-dasharray="3.2 2.4"/><text x="130.6" y="1428.3" text-anchor="middle" font-size="16" font-weight="bold" font-style="italic" fill="#000">A</text><circle cx="130.3" cy="1457.9" r="12" fill="#fff" stroke="#000" stroke-width="2" stroke-dasharray="3.2 2.4"/><text x="130.6" y="1463.5" text-anchor="middle" font-size="16" font-weight="bold" font-style="italic" fill="#000">A</text><circle cx="130.3" cy="1493.1" r="12" fill="#fff" stroke="#000" stroke-width="2" stroke-dasharray="3.2 2.4"/><text x="130.6" y="1498.7" text-anchor="middle" font-size="16" font-weight="bold" font-style="italic" fill="#000">A</text><circle cx="130.3" cy="1528.3" r="12" fill="#fff" stroke="#000" stroke-width="2" stroke-dasharray="3.2 2.4"/><text x="130.6" y="1533.9" text-anchor="middle" font-size="16" font-weight="bold" font-style="italic" fill="#000">A</text><circle cx="130.3" cy="1563.5" r="12" fill="#fff" stroke="#000" stroke-width="2" stroke-dasharray="3.2 2.4"/><text x="130.6" y="1569.1" text-anchor="middle" font-size="16" font-weight="bold" font-style="italic" fill="#000">A</text><circle cx="130.3" cy="1598.7" r="12" fill="#fff" stroke="#000" stroke-width="2" stroke-dasharray="3.2 2.4"/><text x="130.6" y="1604.3" text-anchor="middle" font-size="16" font-weight="bold" font-style="italic" fill="#000">A</text></svg><div style="left:100.5px;top:201.00px;font-size:20.2px;line-height:20.2px;color:#e4e4e4;white-space:nowrap;;-webkit-text-stroke:0.42px">Canvas 1</div><div style="left:135.5px;top:242.00px;font-size:20.8px;line-height:20.8px;color:#e4e4e4;white-space:nowrap;;-webkit-text-stroke:0.42px">Time</div><div style="left:135.5px;top:284.00px;font-size:20.6px;line-height:20.6px;color:#e4e4e4;white-space:nowrap;;-webkit-text-stroke:0.42px">Flow</div><div style="left:158.3px;top:321.00px;font-size:19.6px;line-height:19.6px;color:#e4e4e4;white-space:nowrap;;-webkit-text-stroke:0.42px">Line</div><div style="left:158.3px;top:356.00px;font-size:19.6px;line-height:19.6px;color:#e4e4e4;white-space:nowrap;;-webkit-text-stroke:0.42px">Line</div><div style="left:158.3px;top:392.00px;font-size:19.6px;line-height:19.6px;color:#e4e4e4;white-space:nowrap;;-webkit-text-stroke:0.42px">Line</div><div style="left:158.3px;top:427.00px;font-size:19.6px;line-height:19.6px;color:#e4e4e4;white-space:nowrap;;-webkit-text-stroke:0.42px">Line</div><div style="left:158.3px;top:462.00px;font-size:19.6px;line-height:19.6px;color:#e4e4e4;white-space:nowrap;;-webkit-text-stroke:0.42px">Circle</div><div style="left:158.3px;top:497.00px;font-size:19.6px;line-height:19.6px;color:#e4e4e4;white-space:nowrap;;-webkit-text-stroke:0.42px">Rectangle</div><div style="left:158.3px;top:532.00px;font-size:19.6px;line-height:19.6px;color:#e4e4e4;white-space:nowrap;;-webkit-text-stroke:0.42px">Line</div><div style="left:158.3px;top:568.00px;font-size:19.6px;line-height:19.6px;color:#e4e4e4;white-space:nowrap;;-webkit-text-stroke:0.42px">Line</div><div style="left:158.3px;top:603.00px;font-size:19.6px;line-height:19.6px;color:#e4e4e4;white-space:nowrap;;-webkit-text-stroke:0.42px">Rectangle</div><div style="left:158.3px;top:638.00px;font-size:19.6px;line-height:19.6px;color:#e4e4e4;white-space:nowrap;;-webkit-text-stroke:0.42px">Circle</div><div style="left:158.3px;top:673.00px;font-size:19.6px;line-height:19.6px;color:#e4e4e4;white-space:nowrap;;-webkit-text-stroke:0.42px">Rectangle</div><div style="left:158.3px;top:708.00px;font-size:19.6px;line-height:19.6px;color:#e4e4e4;white-space:nowrap;;-webkit-text-stroke:0.42px">Line</div><div style="left:158.3px;top:744.00px;font-size:19.6px;line-height:19.6px;color:#e4e4e4;white-space:nowrap;;-webkit-text-stroke:0.42px">4 weeks</div><div style="left:158.3px;top:779.00px;font-size:19.6px;line-height:19.6px;color:#e4e4e4;white-space:nowrap;;-webkit-text-stroke:0.42px">Circle</div><div style="left:158.3px;top:814.00px;font-size:19.6px;line-height:19.6px;color:#e4e4e4;white-space:nowrap;;-webkit-text-stroke:0.42px">Circle</div><div style="left:158.3px;top:849.00px;font-size:19.6px;line-height:19.6px;color:#e4e4e4;white-space:nowrap;;-webkit-text-stroke:0.42px">Circle</div><div style="left:158.3px;top:884.00px;font-size:19.6px;line-height:19.6px;color:#e4e4e4;white-space:nowrap;;-webkit-text-stroke:0.42px">Circle</div><div style="left:158.3px;top:920.00px;font-size:19.6px;line-height:19.6px;color:#e4e4e4;white-space:nowrap;;-webkit-text-stroke:0.42px">14 weeks</div><div style="left:158.3px;top:955.00px;font-size:19.6px;line-height:19.6px;color:#e4e4e4;white-space:nowrap;;-webkit-text-stroke:0.42px">Circle</div><div style="left:158.3px;top:990.00px;font-size:19.6px;line-height:19.6px;color:#e4e4e4;white-space:nowrap;;-webkit-text-stroke:0.42px">Circle</div><div style="left:158.3px;top:1025.00px;font-size:19.6px;line-height:19.6px;color:#e4e4e4;white-space:nowrap;;-webkit-text-stroke:0.42px">Circle</div><div style="left:158.3px;top:1060.00px;font-size:19.6px;line-height:19.6px;color:#e4e4e4;white-space:nowrap;;-webkit-text-stroke:0.42px">Circle</div><div style="left:158.3px;top:1096.00px;font-size:19.6px;line-height:19.6px;color:#e4e4e4;white-space:nowrap;;-webkit-text-stroke:0.42px">Circle</div><div style="left:158.3px;top:1131.00px;font-size:19.6px;line-height:19.6px;color:#e4e4e4;white-space:nowrap;;-webkit-text-stroke:0.42px">Circle</div><div style="left:158.3px;top:1166.00px;font-size:19.6px;line-height:19.6px;color:#e4e4e4;white-space:nowrap;;-webkit-text-stroke:0.42px">Circle</div><div style="left:158.3px;top:1201.00px;font-size:19.6px;line-height:19.6px;color:#e4e4e4;white-space:nowrap;;-webkit-text-stroke:0.42px">Circle</div><div style="left:158.3px;top:1236.00px;font-size:19.6px;line-height:19.6px;color:#e4e4e4;white-space:nowrap;;-webkit-text-stroke:0.42px">Circle</div><div style="left:158.3px;top:1272.00px;font-size:19.6px;line-height:19.6px;color:#e4e4e4;white-space:nowrap;letter-spacing:0.23px;-webkit-text-stroke:0.42px">Turnaround Time (in we...</div><div style="left:158.3px;top:1307.00px;font-size:19.6px;line-height:19.6px;color:#e4e4e4;white-space:nowrap;;-webkit-text-stroke:0.42px">Circle</div><div style="left:158.3px;top:1342.00px;font-size:19.6px;line-height:19.6px;color:#e4e4e4;white-space:nowrap;;-webkit-text-stroke:0.42px">Circle</div><div style="left:158.3px;top:1377.00px;font-size:19.6px;line-height:19.6px;color:#e4e4e4;white-space:nowrap;;-webkit-text-stroke:0.42px">Circle</div><div style="left:158.3px;top:1412.00px;font-size:19.6px;line-height:19.6px;color:#e4e4e4;white-space:nowrap;;-webkit-text-stroke:0.42px">Circle</div><div style="left:158.3px;top:1448.00px;font-size:19.6px;line-height:19.6px;color:#e4e4e4;white-space:nowrap;;-webkit-text-stroke:0.42px">Circle</div><div style="left:158.3px;top:1483.00px;font-size:19.6px;line-height:19.6px;color:#e4e4e4;white-space:nowrap;;-webkit-text-stroke:0.42px">Circle</div><div style="left:158.3px;top:1518.00px;font-size:19.6px;line-height:19.6px;color:#e4e4e4;white-space:nowrap;;-webkit-text-stroke:0.42px">Circle</div><div style="left:158.3px;top:1553.00px;font-size:19.6px;line-height:19.6px;color:#e4e4e4;white-space:nowrap;;-webkit-text-stroke:0.42px">Circle</div><div style="left:158.3px;top:1588.00px;font-size:19.6px;line-height:19.6px;color:#e4e4e4;white-space:nowrap;;-webkit-text-stroke:0.42px">Circle</div></div></div><svg style="left:0px;top:0px;font-family:Liberation Sans,sans-serif" width="400" height="192" viewBox="0 0 400 192"><g fill="#3478f6" stroke="#35363a" stroke-width="1.3"><path d="M17,141.9 L32.6,134 L48.2,141.9 L32.6,150.2z"/><path d="M17,135 L32.6,127.1 L48.2,135 L32.6,143.3z"/><path d="M17,127.8 L32.6,119.6 L48.2,127.8 L32.6,136.2z"/></g><g fill="#c6c6c6"><rect x="74.1" y="120.4" width="20.8" height="20.4"/><rect x="96.9" y="120.4" width="6.2" height="20.4"/><rect x="74.1" y="142.9" width="20.8" height="6.1"/><rect x="96.9" y="142.9" width="6.2" height="6.1"/></g><g fill="none" stroke="#c6c6c6" stroke-width="4.8" stroke-linecap="round"><path d="M132.5,122.6 h0.1 M139,122.6 h17.8 M137.4,130.6 h0.1 M144,130.6 h12.8 M142.4,138.8 h0.1 M149.2,138.8 h7.6 M147.2,146.8 h0.1 M153.4,146.8 h3.4"/></g><rect x="188" y="120.5" width="25.5" height="28.5" rx="3" fill="#c6c6c6"/><rect x="192.5" y="127" width="8.5" height="8.5" fill="#35363a"/><rect x="201" y="135.5" width="8.5" height="8.5" fill="#35363a"/></svg><div style="left:17px;top:168.00px;font-size:17.8px;line-height:17.8px;color:#ececec;white-space:nowrap;letter-spacing:0.2px;-webkit-text-stroke:0.42px">Layers</div><div style="left:22px;top:1613.5px;width:287px;height:29px;background:#48494c;border-radius:6px;border:1px solid #3c3d40;box-sizing:border-box"></div><svg style="left:30px;top:1618px;" width="24" height="22" viewBox="0 0 24 22"><circle cx="9" cy="9" r="6.6" fill="none" stroke="#d8d8d8" stroke-width="1.6"/><path d="M13.8,13.8 L19,19" stroke="#d8d8d8" stroke-width="1.8" stroke-linecap="round"/></svg><div style="left:58.5px;top:1619.00px;font-size:18.6px;line-height:18.6px;color:#8e8e91;white-space:nowrap;;-webkit-text-stroke:0.42px">Search</div><div style="left:324px;top:1612px;width:61px;height:32px;background:#68686b;border-radius:6px"></div><svg style="left:324px;top:1612px;" width="61" height="32" viewBox="324 1612 61 32"><polygon points="355.44,1626.34 355.44,1630.06 351.71,1630.88 351.52,1631.34 353.58,1634.55 350.95,1637.18 347.74,1635.12 347.28,1635.31 346.46,1639.04 342.74,1639.04 341.92,1635.31 341.46,1635.12 338.25,1637.18 335.62,1634.55 337.68,1631.34 337.49,1630.88 333.76,1630.06 333.76,1626.34 337.49,1625.52 337.68,1625.06 335.62,1621.85 338.25,1619.22 341.46,1621.28 341.92,1621.09 342.74,1617.36 346.46,1617.36 347.28,1621.09 347.74,1621.28 350.95,1619.22 353.58,1621.85 351.52,1625.06 351.71,1625.52" fill="#d6d6d6"/><circle cx="344.6" cy="1628.2" r="3.5" fill="#68686b"/><path d="M366.8,1625.6 L372.4,1631.2 L378,1625.6" fill="none" stroke="#f0f0f0" stroke-width="1.9"/></svg><div style="left:1848px;top:111px;width:482px;height:1543px;background:#323232"></div><div style="left:1848px;top:111px;width:481px;height:52px;background:#35363a"></div><div style="left:1848px;top:162.2px;width:482px;height:26.9px;background:#35363a;border-top:1.5px solid #58595b;border-bottom:1.3px solid #545557;box-sizing:border-box"></div><div style="left:1847.7px;top:111px;width:1.5px;height:1542px;background:#0c0c0c"></div><div style="left:1857.3px;top:167.00px;font-size:18.4px;line-height:18.4px;color:#f0f0f0;white-space:nowrap;letter-spacing:0.3px;-webkit-text-stroke:0.42px">Object</div><svg style="left:0px;top:0px;" width="2344" height="165" viewBox="0 0 2344 165"><rect x="1863.5" y="122" width="19.5" height="19.3" fill="#3478f6"/><g fill="none" stroke="#3478f6" stroke-width="1.5"><path d="M1888.7,144 V123.4 M1884.6,127.4 L1888.7,123.2 L1892.8,127.4"/><path d="M1885.5,146.6 H1865.2 M1869.2,142.5 L1865,146.6 L1869.2,150.7"/></g><g fill="#3478f6"><rect x="1884.8" y="143.2" width="3.3" height="3.3"/><rect x="1889.3" y="143.2" width="3.3" height="3.3"/><rect x="1884.8" y="147.7" width="3.3" height="3.3"/><rect x="1889.3" y="147.7" width="3.3" height="3.3"/></g><polygon points="1947.20,134.71 1947.20,138.09 1943.76,138.20 1943.16,140.42 1946.09,142.24 1944.40,145.16 1941.36,143.54 1939.74,145.16 1941.36,148.20 1938.44,149.89 1936.62,146.96 1934.40,147.56 1934.29,151.00 1930.91,151.00 1930.80,147.56 1928.58,146.96 1926.76,149.89 1923.84,148.20 1925.46,145.16 1923.84,143.54 1920.80,145.16 1919.11,142.24 1922.04,140.42 1921.44,138.20 1918.00,138.09 1918.00,134.71 1921.44,134.60 1922.04,132.38 1919.11,130.56 1920.80,127.64 1923.84,129.26 1925.46,127.64 1923.84,124.60 1926.76,122.91 1928.58,125.84 1930.80,125.24 1930.91,121.80 1934.29,121.80 1934.40,125.24 1936.62,125.84 1938.44,122.91 1941.36,124.60 1939.74,127.64 1941.36,129.26 1944.40,127.64 1946.09,130.56 1943.16,132.38 1943.76,134.60" fill="#c4c4c4"/><circle cx="1932.6" cy="136.4" r="4.9" fill="#35363a"/><rect x="1972.3" y="122" width="28.8" height="29" fill="#c4c4c4"/><g stroke="#35363a" stroke-width="1.4" fill="none"><path d="M1972.3,129.4 H1997 M1979.6,122 V147"/></g><path d="M1994,126.4 l5.4,3 l-5.4,3z M1976.6,144 l3,5.4 l3,-5.4z" fill="#35363a"/><path d="M2030,122 H2044 L2052.6,130.6 V151 H2030z" fill="#c4c4c4"/><path d="M2044,122 V130.6 H2052.6z" fill="#e2e2e2" stroke="#35363a" stroke-width="0.8"/><rect x="2283" y="123.6" width="26" height="26" rx="3.6" fill="none" stroke="#c4c4c4" stroke-width="3.4"/><path d="M2296,123.6 V149.6 M2283,136.6 H2309" stroke="#c4c4c4" stroke-width="3.2"/></svg><svg style="left:1871.5px;top:210.4px;" width="16" height="14" viewBox="0 0 16 14"><path d="M0.8,0.8 h13.2 l-6.6,12z" fill="#a8a8a8"/></svg><div style="left:1891.2px;top:208.00px;font-size:18.2px;line-height:18.2px;color:#f4f4f4;white-space:nowrap;font-weight:bold;letter-spacing:-0.1px">Fill</div><svg style="left:2289.3px;top:211.1px;" width="22" height="12" viewBox="0 0 22 12"><path d="M0,1 h21 M0,6 h21 M0,11 h21" stroke="#b4b4b4" stroke-width="1.3"/></svg><div style="left:1885.9px;top:242.5px;width:406.4px;height:25.1px;background:#676767;border-radius:5px;box-shadow:0 0.5px 1px rgba(0,0,0,.4)"></div><div style="left:2270px;top:242.5px;width:22.3px;height:25.1px;background:linear-gradient(#3570e4,#2a5cd2);border-radius:0 5px 5px 0"></div><svg style="left:2270px;top:242.5px;" width="22.3" height="25.1" viewBox="0 0 22.3 25.1"><path d="M6.75,10.150000000000011 l4.4,-4.6 l4.4,4.6 M6.75,15.150000000000011 l4.4,4.6 l4.4,-4.6" fill="none" stroke="#fff" stroke-width="1.5"/></svg><div style="left:1929.5px;top:246.00px;font-size:18.4px;line-height:18.4px;color:#f2f2f2;white-space:nowrap;letter-spacing:0px;-webkit-text-stroke:0.42px">Solid Fill</div><div style="left:1900px;top:245.6px;width:19.4px;height:18.8px;background:#ececec"></div><div style="left:1883px;top:283.2px;width:105px;height:26.4px;background:#585858;border:1px solid #6c6c6c;box-sizing:border-box;box-shadow:inset 0 0 0 5px #515151"></div><div style="left:1891.6px;top:292px;width:88px;height:9.6px;background:#ffffc8;box-shadow:0 0 0 1.2px #82827c"></div><div style="left:1988px;top:284px;width:23px;height:25px;background:linear-gradient(#3570e4,#2a5cd2);border-radius:0 5px 5px 0"></div><svg style="left:1988px;top:284px;" width="23" height="25" viewBox="0 0 23 25"><path d="M7.1,10.1 l4.4,-4.6 l4.4,4.6 M7.1,15.1 l4.4,4.6 l4.4,-4.6" fill="none" stroke="#fff" stroke-width="1.5"/></svg><div style="left:1884.8px;top:324.4px;width:56.6px;height:56.4px;background:#000;border-radius:14px;box-shadow:inset 0 0 0 1.4px #4a4a4a;"></div><div style="left:1955.25px;top:324.4px;width:56.6px;height:56.4px;background:#323232;border-radius:14px;box-shadow:inset 0 0 0 1.4px #4a4a4a;"></div><div style="left:2025.7px;top:324.4px;width:56.6px;height:56.4px;background:#666;border-radius:14px;box-shadow:inset 0 0 0 1px rgba(255,255,255,.12);"></div><div style="left:2096.15px;top:324.4px;width:56.6px;height:56.4px;background:#999;border-radius:14px;box-shadow:inset 0 0 0 1px rgba(255,255,255,.12);"></div><div style="left:2166.6px;top:324.4px;width:56.6px;height:56.4px;background:#ccc;border-radius:14px;box-shadow:inset 0 0 0 1px rgba(255,255,255,.12);"></div><div style="left:2237.05px;top:324.4px;width:56.6px;height:56.4px;background:#fff;border-radius:14px;"></div><div style="left:1885.1px;top:394.6px;width:24.4px;height:24.4px;background:#0000fe;border-radius:6px"></div><div style="left:1917.2px;top:394.6px;width:24.4px;height:24.4px;background:#3f3ff0;border-radius:6px"></div><div style="left:1955.3px;top:394.6px;width:24.4px;height:24.4px;background:#ee3023;border-radius:6px"></div><div style="left:1987.3px;top:394.6px;width:24.4px;height:24.4px;background:#ec544f;border-radius:6px"></div><div style="left:2025.8px;top:394.6px;width:24.4px;height:24.4px;background:#e830f1;border-radius:6px"></div><div style="left:2057.8px;top:394.6px;width:24.4px;height:24.4px;background:#ec52f3;border-radius:6px"></div><div style="left:2096.2px;top:394.6px;width:24.4px;height:24.4px;background:#72fa48;border-radius:6px"></div><div style="left:2128.2px;top:394.6px;width:24.4px;height:24.4px;background:#82fa62;border-radius:6px"></div><div style="left:2166.7px;top:394.6px;width:24.4px;height:24.4px;background:#72fafe;border-radius:6px"></div><div style="left:2198.7px;top:394.6px;width:24.4px;height:24.4px;background:#76fafe;border-radius:6px"></div><div style="left:2237.1px;top:394.6px;width:24.4px;height:24.4px;background:#fffe52;border-radius:6px"></div><div style="left:2269.1px;top:394.6px;width:24.4px;height:24.4px;background:#fffe62;border-radius:6px"></div><div style="left:1885.1px;top:426.6px;width:24.4px;height:24.4px;background:#8282f8;border-radius:6px"></div><div style="left:1917.2px;top:426.6px;width:24.4px;height:24.4px;background:#bfbffd;border-radius:6px"></div><div style="left:1955.3px;top:426.6px;width:24.4px;height:24.4px;background:#f08887;border-radius:6px"></div><div style="left:1987.3px;top:426.6px;width:24.4px;height:24.4px;background:#f6c3c2;border-radius:6px"></div><div style="left:2025.8px;top:426.6px;width:24.4px;height:24.4px;background:#f088f8;border-radius:6px"></div><div style="left:2057.8px;top:426.6px;width:24.4px;height:24.4px;background:#f6c4fa;border-radius:6px"></div><div style="left:2096.2px;top:426.6px;width:24.4px;height:24.4px;background:#a2fc90;border-radius:6px"></div><div style="left:2128.2px;top:426.6px;width:24.4px;height:24.4px;background:#ccfec8;border-radius:6px"></div><div style="left:2166.7px;top:426.6px;width:24.4px;height:24.4px;background:#92fcfe;border-radius:6px"></div><div style="left:2198.7px;top:426.6px;width:24.4px;height:24.4px;background:#c2fefe;border-radius:6px"></div><div style="left:2237.1px;top:426.6px;width:24.4px;height:24.4px;background:#fffe8a;border-radius:6px"></div><div style="left:2269.1px;top:426.6px;width:24.4px;height:24.4px;background:#fffec2;border-radius:6px"></div><div style="left:1885.9px;top:464.8px;width:406.4px;height:25.2px;background:#676767;border-radius:5px;box-shadow:0 0.5px 1px rgba(0,0,0,.4)"></div><div style="left:2270px;top:464.8px;width:22.3px;height:25.2px;background:linear-gradient(#3570e4,#2a5cd2);border-radius:0 5px 5px 0"></div><svg style="left:2270px;top:464.8px;" width="22.3" height="25.2" viewBox="0 0 22.3 25.2"><path d="M6.75,10.199999999999994 l4.4,-4.6 l4.4,4.6 M6.75,15.199999999999994 l4.4,4.6 l4.4,-4.6" fill="none" stroke="#fff" stroke-width="1.5"/></svg><div style="left:1897.3px;top:469.00px;font-size:18.4px;line-height:18.4px;color:#f2f2f2;white-space:nowrap;letter-spacing:0px;-webkit-text-stroke:0.42px">Normal</div><div style="left:1885.9px;top:511.6px;width:266.1px;height:25px;background:#676767;border-radius:5px;box-shadow:0 0.5px 1px rgba(0,0,0,.4)"></div><div style="left:2129.7px;top:511.6px;width:22.3px;height:25px;background:linear-gradient(#3570e4,#2a5cd2);border-radius:0 5px 5px 0"></div><svg style="left:2129.7px;top:511.6px;" width="22.3" height="25" viewBox="0 0 22.3 25"><path d="M6.75,10.1 l4.4,-4.6 l4.4,4.6 M6.75,15.1 l4.4,4.6 l4.4,-4.6" fill="none" stroke="#fff" stroke-width="1.5"/></svg><div style="left:1897.3px;top:515.00px;font-size:18.4px;line-height:18.4px;color:#f2f2f2;white-space:nowrap;letter-spacing:0.35px;-webkit-text-stroke:0.42px">No Effect</div><div style="left:1868.6px;top:554.8px;width:444.6px;height:1.2px;background:#3f3f3f"></div><svg style="left:1871.5px;top:572.6px;" width="16" height="14" viewBox="0 0 16 14"><path d="M0.8,0.8 h13.2 l-6.6,12z" fill="#a8a8a8"/></svg><div style="left:1891.2px;top:570.00px;font-size:18.2px;line-height:18.2px;color:#f4f4f4;white-space:nowrap;font-weight:bold;letter-spacing:-0.1px">Stroke</div><svg style="left:2292.3px;top:573.3px;" width="22" height="12" viewBox="0 0 22 12"><path d="M0,1 h21 M0,6 h21 M0,11 h21" stroke="#b4b4b4" stroke-width="1.3"/></svg><div style="left:1885.9px;top:604px;width:406.4px;height:25.2px;background:#676767;border-radius:5px;box-shadow:0 0.5px 1px rgba(0,0,0,.4)"></div><div style="left:2270px;top:604px;width:22.3px;height:25.2px;background:linear-gradient(#3570e4,#2a5cd2);border-radius:0 5px 5px 0"></div><svg style="left:2270px;top:604px;" width="22.3" height="25.2" viewBox="0 0 22.3 25.2"><path d="M6.75,10.200000000000022 l4.4,-4.6 l4.4,4.6 M6.75,15.200000000000022 l4.4,4.6 l4.4,-4.6" fill="none" stroke="#fff" stroke-width="1.5"/></svg><div style="left:1929.5px;top:608.00px;font-size:18.4px;line-height:18.4px;color:#f2f2f2;white-space:nowrap;letter-spacing:0px;-webkit-text-stroke:0.42px">Single Stroke</div><div style="left:1900.4px;top:607.4px;width:18.6px;height:18.4px;border:1.3px solid #d8d8d8;box-sizing:border-box"></div><svg style="left:1884px;top:644px;" width="28" height="28" viewBox="0 0 28 28"><g fill="#dadada"><rect x="2" y="1.2" width="24" height="8"/><rect x="2" y="14.2" width="24" height="4.8"/><rect x="2" y="23.9" width="24" height="1.6"/></g><g fill="#9c9c9c"><path d="M0.6,5.2 l2.2,-2.2 l2.2,2.2 l-2.2,2.2z M23,5.2 l2.2,-2.2 l2.2,2.2 l-2.2,2.2z M0.6,16.6 l2.2,-2.2 l2.2,2.2 l-2.2,2.2z M23,16.6 l2.2,-2.2 l2.2,2.2 l-2.2,2.2z M0.6,24.7 l2.2,-2.2 l2.2,2.2 l-2.2,2.2z M23,24.7 l2.2,-2.2 l2.2,2.2 l-2.2,2.2z"/></g></svg><div style="left:1919px;top:644px;width:75.5px;height:29.6px;background:#3d3d3d;border:1px solid;border-color:#595959 #474747 #595959 #474747;box-sizing:border-box"></div><div style="left:1995.3px;top:644px;width:16.7px;height:29.6px;background:#3d3d3d;border:1px solid;border-color:#595959 #474747 #595959 #474747;box-sizing:border-box"></div><svg style="left:1997.65px;top:648.8px;" width="12" height="20" viewBox="0 0 12 20"><path d="M2.2,7.8 L6,3.6 L9.8,7.8 M2.2,12.2 L6,16.4 L9.8,12.2" fill="none" stroke="#ececec" stroke-width="1.4"/></svg><div style="left:1925px;top:650.00px;font-size:18.6px;line-height:18.6px;color:#f2f2f2;white-space:nowrap;letter-spacing:-0.3px;-webkit-text-stroke:0.42px">1 pt</div><div style="left:2023.8px;top:645.2px;width:79.6px;height:26.6px;background:#585858;border:1px solid #6c6c6c;box-sizing:border-box;box-shadow:inset 0 0 0 5px #515151"></div><div style="left:2032.6px;top:653.6px;width:62.6px;height:9.4px;background:#000;box-shadow:0 0 0 1.2px #747474"></div><div style="left:2103.4px;top:646px;width:22.6px;height:24.6px;background:linear-gradient(#3570e4,#2a5cd2);border-radius:0 5px 5px 0"></div><svg style="left:2103.4px;top:646px;" width="22.6" height="24.6" viewBox="0 0 22.6 24.6"><path d="M6.9,9.9 l4.4,-4.6 l4.4,4.6 M6.9,14.9 l4.4,4.6 l4.4,-4.6" fill="none" stroke="#fff" stroke-width="1.5"/></svg><div style="left:1885.9px;top:685.4px;width:125.1px;height:25px;background:#676767;border-radius:5px;box-shadow:0 0.5px 1px rgba(0,0,0,.4)"></div><div style="left:1988.7px;top:685.4px;width:22.3px;height:25px;background:linear-gradient(#3570e4,#2a5cd2);border-radius:0 5px 5px 0"></div><svg style="left:1988.7px;top:685.4px;" width="22.3" height="25" viewBox="0 0 22.3 25"><path d="M6.75,10.1 l4.4,-4.6 l4.4,4.6 M6.75,15.1 l4.4,4.6 l4.4,-4.6" fill="none" stroke="#fff" stroke-width="1.5"/></svg><div style="left:1897.5px;top:698px;width:80px;height:1.5px;background:#e6e6e6"></div><div style="left:2030px;top:685.3px;width:124.8px;height:25.6px;background:#6b6b6b;border-radius:5px"></div><div style="left:2073px;top:685.3px;width:42px;height:25.6px;background:linear-gradient(#3570e4,#2a5cd2)"></div><svg style="left:2030px;top:685.4px;" width="124.8" height="25" viewBox="0 0 124.8 25"><g fill="none" stroke="#f2f2f2" stroke-width="1.6"><path d="M10.4,20.8 V6 H32"/><path d="M51.6,20.8 C52.2,11.6 60,6 73.6,5.9"/><path d="M93.6,20.8 V16.6 L102.6,6 H115.2"/></g></svg><div style="left:2170.8px;top:685.3px;width:125.2px;height:25.6px;background:#6b6b6b;border-radius:5px"></div><div style="left:2213.6px;top:685.3px;width:41.8px;height:25.6px;background:linear-gradient(#3570e4,#2a5cd2)"></div><svg style="left:2170.8px;top:685.4px;" width="125.2" height="25" viewBox="0 0 125.2 25"><g fill="none" stroke="#f2f2f2" stroke-width="1.6"><path d="M6.4,7.4 H35.6 M6.4,18.2 H35.6"/><rect x="48.4" y="7.4" width="28.2" height="10.8" rx="5.4"/><rect x="90" y="7.4" width="28.2" height="10.8"/></g></svg><div style="left:1868.6px;top:737px;width:444.6px;height:1.2px;background:#3f3f3f"></div><svg style="left:1872px;top:752px;" width="14" height="17" viewBox="0 0 14 17"><path d="M1.2,1.2 v14 l11.4,-7z" fill="#a8a8a8"/></svg><div style="left:1891.2px;top:752.00px;font-size:18.2px;line-height:18.2px;color:#f4f4f4;white-space:nowrap;font-weight:bold;letter-spacing:-0.1px">Shadow</div><svg style="left:2289.3px;top:755.1px;" width="22" height="12" viewBox="0 0 22 12"><path d="M0,1 h21 M0,6 h21 M0,11 h21" stroke="#b4b4b4" stroke-width="1.3"/></svg><div style="left:1868.6px;top:788.8px;width:444.6px;height:1.2px;background:#3f3f3f"></div><svg style="left:1871.5px;top:806px;" width="16" height="14" viewBox="0 0 16 14"><path d="M0.8,0.8 h13.2 l-6.6,12z" fill="#a8a8a8"/></svg><div style="left:1891.2px;top:803.00px;font-size:18.2px;line-height:18.2px;color:#f4f4f4;white-space:nowrap;font-weight:bold;letter-spacing:-0.1px">Shape</div><svg style="left:2289.3px;top:806.7px;" width="22" height="12" viewBox="0 0 22 12"><path d="M0,1 h21 M0,6 h21 M0,11 h21" stroke="#b4b4b4" stroke-width="1.3"/></svg><div style="left:1885.9px;top:837.6px;width:406.4px;height:47.8px;background:#6b6b6b;border-radius:6px"></div><div style="left:1894.6px;top:845.4px;width:35.6px;height:35px;background:#fff;box-shadow:0 0 0 1.2px #4a4a4a"></div><div style="left:1610.2px;width:1000px;text-align:center;top:853.00px;font-size:18.8px;line-height:18.8px;color:#f2f2f2;white-space:nowrap;;-webkit-text-stroke:0.42px">Rectangle</div><svg style="left:1883px;top:900px;" width="30" height="30" viewBox="0 0 30 30"><g fill="none" stroke="#d8d8d8" stroke-width="1.4"><path d="M5.4,23.4 C6.6,13 13,6.6 23.2,5.6"/><path d="M4.6,24 L4.2,6.4 M6,4.8 L23,4.8"/><path d="M4.2,2 l2.6,2.6 l-2.6,2.6 l-2.6,-2.6z M25.4,2.4 l2.6,2.6 l-2.6,2.6 l-2.6,-2.6z M4.6,23.2 l2.6,2.6 l-2.6,2.6 l-2.6,-2.6z" fill="#323232"/></g></svg><div style="left:1919px;top:900.4px;width:75.5px;height:29.2px;background:#3d3d3d;border:1px solid;border-color:#595959 #474747 #595959 #474747;box-sizing:border-box"></div><div style="left:1995.3px;top:900.4px;width:16.7px;height:29.2px;background:#3d3d3d;border:1px solid;border-color:#595959 #474747 #595959 #474747;box-sizing:border-box"></div><svg style="left:1997.65px;top:905px;" width="12" height="20" viewBox="0 0 12 20"><path d="M2.2,7.8 L6,3.6 L9.8,7.8 M2.2,12.2 L6,16.4 L9.8,12.2" fill="none" stroke="#ececec" stroke-width="1.4"/></svg><div style="left:1925px;top:907.00px;font-size:18.6px;line-height:18.6px;color:#f2f2f2;white-space:nowrap;letter-spacing:-0.3px;-webkit-text-stroke:0.42px">2 pt</div><div style="left:1885.9px;top:944.8px;width:54.4px;height:25px;background:#585858;border-radius:5px"></div><div style="left:1956.6px;top:944.8px;width:54.4px;height:25px;background:#585858;border-radius:5px"></div><div style="left:2026.8px;top:944.8px;width:54.4px;height:25px;background:#585858;border-radius:5px"></div><div style="left:2238px;top:944.8px;width:54.4px;height:25px;background:#585858;border-radius:5px"></div><svg style="left:1885.9px;top:943.8px;" width="54.4" height="25" viewBox="0 0 54.4 25"><path d="M18.4,4.6 H30 V9.4 A6.8,6.8 0 1 1 22,16.4 H18.4z" fill="none" stroke="#8c8c8c" stroke-width="1.4"/></svg><svg style="left:1956.6px;top:943.8px;" width="54.4" height="25" viewBox="0 0 54.4 25"><g fill="none" stroke="#8c8c8c" stroke-width="1.4"><rect x="18.4" y="4.6" width="11.6" height="11.6"/><circle cx="29.6" cy="14.6" r="6.6"/></g></svg><svg style="left:2026.8px;top:943.8px;" width="54.4" height="25" viewBox="0 0 54.4 25"><g fill="none" stroke="#8c8c8c" stroke-width="1.4"><path d="M18.4,4.6 H30 V8.4 A6.8,6.8 0 0 0 22.6,16.2 H18.4z"/><circle cx="29.6" cy="14.6" r="6.6"/></g></svg><svg style="left:2238px;top:943.8px;" width="54.4" height="25" viewBox="0 0 54.4 25"><g fill="none" stroke="#8c8c8c" stroke-width="1.4"><rect x="18.4" y="4.6" width="11.6" height="11.6"/><circle cx="29.6" cy="14.6" r="6.6"/></g></svg><div style="left:1868.6px;top:996px;width:444.6px;height:1.2px;background:#3f3f3f"></div><svg style="left:1871.5px;top:1012.6px;" width="16" height="14" viewBox="0 0 16 14"><path d="M0.8,0.8 h13.2 l-6.6,12z" fill="#a8a8a8"/></svg><div style="left:1891.2px;top:1010.00px;font-size:18.2px;line-height:18.2px;color:#f4f4f4;white-space:nowrap;font-weight:bold;letter-spacing:-0.1px">Line</div><svg style="left:2289.3px;top:1013.3px;" width="22" height="12" viewBox="0 0 22 12"><path d="M0,1 h21 M0,6 h21 M0,11 h21" stroke="#b4b4b4" stroke-width="1.3"/></svg><div style="left:1885.9px;top:1044px;width:406.4px;height:25.4px;background:#676767;border-radius:5px;box-shadow:0 0.5px 1px rgba(0,0,0,.4)"></div><div style="left:2270px;top:1044px;width:22.3px;height:25.4px;background:linear-gradient(#3570e4,#2a5cd2);border-radius:0 5px 5px 0"></div><svg style="left:2270px;top:1044px;" width="22.3" height="25.4" viewBox="0 0 22.3 25.4"><path d="M6.75,10.300000000000045 l4.4,-4.6 l4.4,4.6 M6.75,15.300000000000045 l4.4,4.6 l4.4,-4.6" fill="none" stroke="#fff" stroke-width="1.5"/></svg><div style="left:1949.9px;top:1048.00px;font-size:18.4px;line-height:18.4px;color:#f2f2f2;white-space:nowrap;letter-spacing:0.35px;-webkit-text-stroke:0.42px">Straight</div><svg style="left:1898px;top:1046px;" width="24" height="22" viewBox="0 0 24 22"><g fill="none" stroke="#a8a8a8" stroke-width="1.3"><path d="M4.4,17.6 L17.8,4.2"/><circle cx="3.6" cy="18.4" r="1.5"/><circle cx="18.6" cy="3.4" r="1.5"/></g></svg><div style="left:1885.9px;top:1085.6px;width:115.1px;height:25.2px;background:#676767;border-radius:5px;box-shadow:0 0.5px 1px rgba(0,0,0,.4)"></div><div style="left:1978.7px;top:1085.6px;width:22.3px;height:25.2px;background:linear-gradient(#3570e4,#2a5cd2);border-radius:0 5px 5px 0"></div><svg style="left:1978.7px;top:1085.6px;" width="22.3" height="25.2" viewBox="0 0 22.3 25.2"><path d="M6.75,10.200000000000022 l4.4,-4.6 l4.4,4.6 M6.75,15.200000000000022 l4.4,4.6 l4.4,-4.6" fill="none" stroke="#fff" stroke-width="1.5"/></svg><div style="left:1901px;top:1097.6px;width:70px;height:1.5px;background:#e6e6e6"></div><div style="left:2026.8px;top:1085.6px;width:125.2px;height:25.2px;background:#676767;border-radius:5px"></div><svg style="left:2026.8px;top:1085.6px;" width="125.2" height="25.2" viewBox="0 0 125.2 25.2"><g fill="none" stroke="#f2f2f2" stroke-width="1.5"><path d="M54.6,8.4 H70.6 M66.2,4 L70.6,8.4 L66.2,12.8 M70.8,17 H54.8 M59.2,12.6 L54.8,17 L59.2,21.4"/></g></svg><div style="left:2177.4px;top:1085.6px;width:114.9px;height:25.2px;background:#676767;border-radius:5px;box-shadow:0 0.5px 1px rgba(0,0,0,.4)"></div><div style="left:2270px;top:1085.6px;width:22.3px;height:25.2px;background:linear-gradient(#3570e4,#2a5cd2);border-radius:0 5px 5px 0"></div><svg style="left:2270px;top:1085.6px;" width="22.3" height="25.2" viewBox="0 0 22.3 25.2"><path d="M6.75,10.200000000000022 l4.4,-4.6 l4.4,4.6 M6.75,15.200000000000022 l4.4,4.6 l4.4,-4.6" fill="none" stroke="#fff" stroke-width="1.5"/></svg><svg style="left:2177.4px;top:1085.6px;" width="93" height="25.2" viewBox="0 0 93 25.2"><path d="M9.6,12.6 H66" stroke="#e6e6e6" stroke-width="1.5"/><path d="M77.4,12.6 L62.4,7.2 V18z" fill="#e6e6e6"/></svg><div style="left:1885px;top:1126px;width:99.4px;height:29px;background:#3d3d3d;border:1px solid;border-color:#595959 #474747 #595959 #474747;box-sizing:border-box"></div><div style="left:1985.2px;top:1126px;width:16.8px;height:29px;background:#3d3d3d;border:1px solid;border-color:#595959 #474747 #595959 #474747;box-sizing:border-box"></div><svg style="left:1987.6px;top:1130.5px;" width="12" height="20" viewBox="0 0 12 20"><path d="M2.2,7.8 L6,3.6 L9.8,7.8 M2.2,12.2 L6,16.4 L9.8,12.2" fill="none" stroke="#ececec" stroke-width="1.4"/></svg><div style="left:1890.6px;top:1133.00px;font-size:17.8px;line-height:17.8px;color:#f2f2f2;white-space:nowrap;letter-spacing:-0.1px;-webkit-text-stroke:0.42px">100%</div><svg style="left:2024px;top:1126px;" width="30" height="30" viewBox="0 0 30 30"><g fill="none" stroke="#d8d8d8" stroke-width="1.4"><path d="M5.4,23.4 C6.6,13 13,6.6 23.2,5.6"/><path d="M4.6,24 L4.2,6.4 M6,4.8 L23,4.8"/><path d="M4.2,2 l2.6,2.6 l-2.6,2.6 l-2.6,-2.6z M25.4,2.4 l2.6,2.6 l-2.6,2.6 l-2.6,-2.6z M4.6,23.2 l2.6,2.6 l-2.6,2.6 l-2.6,-2.6z" fill="#323232"/></g></svg><div style="left:2059.6px;top:1126px;width:76.2px;height:29px;background:#3d3d3d;border:1px solid;border-color:#595959 #474747 #595959 #474747;box-sizing:border-box"></div><div style="left:2136.6px;top:1126px;width:16px;height:29px;background:#3d3d3d;border:1px solid;border-color:#595959 #474747 #595959 #474747;box-sizing:border-box"></div><svg style="left:2138.6px;top:1130.5px;" width="12" height="20" viewBox="0 0 12 20"><path d="M2.2,7.8 L6,3.6 L9.8,7.8 M2.2,12.2 L6,16.4 L9.8,12.2" fill="none" stroke="#ececec" stroke-width="1.4"/></svg><div style="left:2065.6px;top:1132.00px;font-size:18.6px;line-height:18.6px;color:#f2f2f2;white-space:nowrap;letter-spacing:-0.3px;-webkit-text-stroke:0.42px">0 pt</div><div style="left:2176.6px;top:1126px;width:99.7px;height:29px;background:#3d3d3d;border:1px solid;border-color:#595959 #474747 #595959 #474747;box-sizing:border-box"></div><div style="left:2277.1px;top:1126px;width:16.4px;height:29px;background:#3d3d3d;border:1px solid;border-color:#595959 #474747 #595959 #474747;box-sizing:border-box"></div><svg style="left:2279.3px;top:1130.5px;" width="12" height="20" viewBox="0 0 12 20"><path d="M2.2,7.8 L6,3.6 L9.8,7.8 M2.2,12.2 L6,16.4 L9.8,12.2" fill="none" stroke="#ececec" stroke-width="1.4"/></svg><div style="left:2182.2px;top:1132.00px;font-size:18px;line-height:18px;color:#f2f2f2;white-space:nowrap;letter-spacing:0px;-webkit-text-stroke:0.42px">50%</div><div style="left:1011.6px;width:1000px;text-align:right;top:1175.00px;font-size:18.4px;line-height:18.4px;color:#ececec;white-space:nowrap;;-webkit-text-stroke:0.42px">Line Hops:</div><div style="left:2026.8px;top:1170.4px;width:265.5px;height:25.2px;background:#676767;border-radius:5px;box-shadow:0 0.5px 1px rgba(0,0,0,.4)"></div><div style="left:2270px;top:1170.4px;width:22.3px;height:25.2px;background:linear-gradient(#3570e4,#2a5cd2);border-radius:0 5px 5px 0"></div><svg style="left:2270px;top:1170.4px;" width="22.3" height="25.2" viewBox="0 0 22.3 25.2"><path d="M6.75,10.199999999999909 l4.4,-4.6 l4.4,4.6 M6.75,15.199999999999909 l4.4,4.6 l4.4,-4.6" fill="none" stroke="#fff" stroke-width="1.5"/></svg><div style="left:2037.8px;top:1174.00px;font-size:18.4px;line-height:18.4px;color:#f2f2f2;white-space:nowrap;letter-spacing:0.3px;-webkit-text-stroke:0.42px">Do nothing</div><div style="left:1011.6px;width:1000px;text-align:right;top:1213.00px;font-size:18.4px;line-height:18.4px;color:#ececec;white-space:nowrap;;-webkit-text-stroke:0.42px">Line Labels:</div><div style="left:2026.8px;top:1208.6px;width:265.5px;height:25.2px;background:#676767;border-radius:5px;box-shadow:0 0.5px 1px rgba(0,0,0,.4)"></div><div style="left:2270px;top:1208.6px;width:22.3px;height:25.2px;background:linear-gradient(#3570e4,#2a5cd2);border-radius:0 5px 5px 0"></div><svg style="left:2270px;top:1208.6px;" width="22.3" height="25.2" viewBox="0 0 22.3 25.2"><path d="M6.75,10.200000000000022 l4.4,-4.6 l4.4,4.6 M6.75,15.200000000000022 l4.4,4.6 l4.4,-4.6" fill="none" stroke="#fff" stroke-width="1.5"/></svg><div style="left:2037.8px;top:1213.00px;font-size:18.4px;line-height:18.4px;color:#f2f2f2;white-space:nowrap;letter-spacing:0.33px;-webkit-text-stroke:0.42px">Do not clip the line's stroke</div><div style="left:1868.6px;top:1252.6px;width:444.6px;height:1.2px;background:#3f3f3f"></div><svg style="left:1871.5px;top:1270px;" width="16" height="14" viewBox="0 0 16 14"><path d="M0.8,0.8 h13.2 l-6.6,12z" fill="#a8a8a8"/></svg><div style="left:1891.2px;top:1267.00px;font-size:18.2px;line-height:18.2px;color:#f4f4f4;white-space:nowrap;font-weight:bold;letter-spacing:-0.1px">Image</div><svg style="left:2289.3px;top:1270.7px;" width="22" height="12" viewBox="0 0 22 12"><path d="M0,1 h21 M0,6 h21 M0,11 h21" stroke="#b4b4b4" stroke-width="1.3"/></svg><div style="left:1885.9px;top:1301.6px;width:224.2px;height:25.2px;background:#6e6e6e;border-radius:5px"></div><div style="left:1498px;width:1000px;text-align:center;top:1306.00px;font-size:18.2px;line-height:18.2px;color:#f4f4f4;white-space:nowrap;;-webkit-text-stroke:0.42px">Set Image...</div><div style="left:2126px;top:1301.6px;width:90px;height:25.2px;background:#565656;border-radius:5px"></div><div style="left:1671px;width:1000px;text-align:center;top:1307.00px;font-size:17.8px;line-height:17.8px;color:#8c8c8c;white-space:nowrap;;-webkit-text-stroke:0.42px">Remove</div><div style="left:2232px;top:1301.6px;width:60.3px;height:25.2px;background:#636363;border-radius:5px"></div><div style="left:2270px;top:1301.6px;width:22.3px;height:25.2px;background:linear-gradient(#3570e4,#2a5cd2);border-radius:0 5px 5px 0"></div><svg style="left:2270px;top:1301.6px;" width="22.3" height="25.2" viewBox="0 0 22.3 25.2"><path d="M6.2,10.2 L11.2,15.2 L16.2,10.2" fill="none" stroke="#fff" stroke-width="1.8"/></svg><svg style="left:0px;top:0px;" width="2344" height="1661" viewBox="0 0 2344 1661"><polygon points="2262.85,1312.64 2262.85,1316.16 2259.34,1316.94 2259.16,1317.37 2261.09,1320.40 2258.60,1322.89 2255.57,1320.96 2255.14,1321.14 2254.36,1324.65 2250.84,1324.65 2250.06,1321.14 2249.63,1320.96 2246.60,1322.89 2244.11,1320.40 2246.04,1317.37 2245.86,1316.94 2242.35,1316.16 2242.35,1312.64 2245.86,1311.86 2246.04,1311.43 2244.11,1308.40 2246.60,1305.91 2249.63,1307.84 2250.06,1307.66 2250.84,1304.15 2254.36,1304.15 2255.14,1307.66 2255.57,1307.84 2258.60,1305.91 2261.09,1308.40 2259.16,1311.43 2259.34,1311.86" fill="#f2f2f2"/><circle cx="2252.6" cy="1314.4" r="3.3" fill="#636363"/></svg><div style="left:1883px;top:1339.8px;width:413px;height:300px;background:#3b3b3b;border:1.4px solid #444;border-radius:9px;box-sizing:border-box"></div><div style="left:1848.6px;top:1602.6px;width:482px;height:52px;background:#35363a;border-top:1.2px solid #4c4d50;box-sizing:border-box"></div><div style="left:1862px;top:1610.8px;width:38px;height:34.4px;background:#757575;border-radius:5px;box-shadow:inset 0 0 0 1px #868686"></div><div style="left:1913.5px;top:1610.8px;width:212.5px;height:34.4px;background:#757575;border-radius:5px;box-shadow:inset 0 0 0 1px #868686"></div><div style="left:9px;top:7px;width:2321px;height:103px;background:linear-gradient(#464646,#3b3b3b 45%,#383838);"></div><div style="left:9px;top:109.6px;width:2321px;height:1.4px;background:#161616"></div><div style="left:21px;top:14.4px;width:19.8px;height:19.8px;background:#ed655a;border-radius:50%"></div><div style="left:53.1px;top:14.4px;width:19.8px;height:19.8px;background:#e2c14d;border-radius:50%"></div><div style="left:85.2px;top:14.4px;width:19.8px;height:19.8px;background:#72c449;border-radius:50%"></div><div style="left:1018.5px;top:15.00px;font-size:21.6px;line-height:21.6px;color:#c8c8c8;white-space:nowrap;letter-spacing:0.16px;-webkit-text-stroke:0.42px">Updated Process.graffle</div><div style="left:1261.5px;top:15.00px;font-size:21.6px;line-height:21.6px;color:#828282;white-space:nowrap;letter-spacing:0.1px;-webkit-text-stroke:0.42px">— Edited</div><div style="left:1308px;width:1000px;text-align:right;top:18.00px;font-size:18.3px;line-height:18.3px;color:#8a8a8a;white-space:nowrap;font-weight:bold;letter-spacing:0.13px">download a new test build within 18 days</div><div style="left:21.3px;top:55px;width:67.3px;height:35px;background:#6c6c6c;border-radius:6px;"></div><div style="left:165.4px;top:55px;width:67.2px;height:35px;background:#6c6c6c;border-radius:6px;"></div><div style="left:245.5px;top:55px;width:66.9px;height:35px;background:#6c6c6c;border-radius:6px;"></div><div style="left:325.6px;top:55px;width:67.1px;height:35px;background:#6c6c6c;border-radius:6px;"></div><div style="left:1318px;top:55px;width:67px;height:35px;background:#6c6c6c;border-radius:6px;"></div><div style="left:1398px;top:55px;width:67px;height:35px;background:#6c6c6c;border-radius:6px;"></div><div style="left:1478px;top:55px;width:67px;height:35px;background:#6c6c6c;border-radius:6px;"></div><div style="left:1558px;top:55px;width:67px;height:35px;background:#6c6c6c;border-radius:6px;"></div><div style="left:2169.2px;top:55px;width:67px;height:35px;background:#6c6c6c;border-radius:6px;"></div><div style="left:2249.5px;top:55px;width:66.8px;height:35px;background:#6c6c6c;border-radius:6px;"></div><div style="left:469.8px;top:46.8px;width:51px;height:51px;background:#595959;border-radius:6px;box-shadow:inset 0 0 0 1px #505050"></div><div style="left:537.1px;top:50px;width:44px;height:43.3px;background:linear-gradient(#cfcfd1,#c2c2c4);border-radius:7px;box-shadow:0 1px 1.5px rgba(0,0,0,.35)"></div><div style="left:585.3px;top:50px;width:44px;height:43.3px;background:linear-gradient(#6c6c6e,#5f5f61);border-radius:7px;box-shadow:0 1px 1.5px rgba(0,0,0,.35)"></div><div style="left:633.4px;top:50px;width:44px;height:43.3px;background:linear-gradient(#6c6c6e,#5f5f61);border-radius:7px;box-shadow:0 1px 1.5px rgba(0,0,0,.35)"></div><div style="left:681.3px;top:50px;width:44px;height:43.3px;background:linear-gradient(#6c6c6e,#5f5f61);border-radius:7px;box-shadow:0 1px 1.5px rgba(0,0,0,.35)"></div><div style="left:729.3px;top:50px;width:44px;height:43.3px;background:linear-gradient(#6c6c6e,#5f5f61);border-radius:7px;box-shadow:0 1px 1.5px rgba(0,0,0,.35)"></div><div style="left:777.4px;top:50px;width:44px;height:43.3px;background:linear-gradient(#6c6c6e,#5f5f61);border-radius:7px;box-shadow:0 1px 1.5px rgba(0,0,0,.35)"></div><div style="left:825.3px;top:50px;width:44px;height:43.3px;background:linear-gradient(#6c6c6e,#5f5f61);border-radius:7px;box-shadow:0 1px 1.5px rgba(0,0,0,.35)"></div><div style="left:908.7px;top:50px;width:44px;height:43.3px;background:linear-gradient(#6c6c6e,#5f5f61);border-radius:7px;box-shadow:0 1px 1.5px rgba(0,0,0,.35)"></div><div style="left:956.8px;top:50px;width:44px;height:43.3px;background:linear-gradient(#6c6c6e,#5f5f61);border-radius:7px;box-shadow:0 1px 1.5px rgba(0,0,0,.35)"></div><div style="left:1005px;top:50px;width:44px;height:43.3px;background:linear-gradient(#6c6c6e,#5f5f61);border-radius:7px;box-shadow:0 1px 1.5px rgba(0,0,0,.35)"></div><div style="left:1053px;top:50px;width:44px;height:43.3px;background:linear-gradient(#6c6c6e,#5f5f61);border-radius:7px;box-shadow:0 1px 1.5px rgba(0,0,0,.35)"></div><div style="left:1101.2px;top:50px;width:44px;height:43.3px;background:linear-gradient(#6c6c6e,#5f5f61);border-radius:7px;box-shadow:0 1px 1.5px rgba(0,0,0,.35)"></div><div style="left:1149px;top:50px;width:44px;height:43.3px;background:linear-gradient(#6c6c6e,#5f5f61);border-radius:7px;box-shadow:0 1px 1.5px rgba(0,0,0,.35)"></div><div style="left:1197.1px;top:50px;width:44px;height:43.3px;background:linear-gradient(#6c6c6e,#5f5f61);border-radius:7px;box-shadow:0 1px 1.5px rgba(0,0,0,.35)"></div><div style="left:873.2px;top:56px;width:31.6px;height:30.6px;background:linear-gradient(#6b6b6d,#606062);border-radius:6px;box-shadow:0 1px 1.5px rgba(0,0,0,.35)"></div><div style="left:203px;width:1000px;text-align:center;top:58.00px;font-size:31.2px;line-height:31.2px;color:#fff;white-space:nowrap;;-webkit-text-stroke:0.42px">A</div><svg style="left:0px;top:0px;" width="2344" height="112" viewBox="0 0 2344 112"><g><rect x="990.5" y="12.3" width="17.4" height="23.6" fill="#fff"/><rect x="990.5" y="12.3" width="17.4" height="3.2" fill="#58c458"/><g stroke="#4bc04b" stroke-width="1.7" stroke-linecap="round"><path d="M999,26.5 L994.5,21 M999,26.5 L1003.5,20.6 M999,26.5 L1005,27.5 M999,26.5 L1002.5,32.5 M999,26.5 L994,31.5 M999,26.5 L993.5,26"/></g><circle cx="999" cy="26.5" r="3.4" fill="#4bc04b"/><g fill="#4bc04b"><circle cx="994.3" cy="20.8" r="1.6"/><circle cx="1003.7" cy="20.4" r="1.6"/><circle cx="1005.3" cy="27.6" r="1.6"/><circle cx="1002.6" cy="32.8" r="1.6"/><circle cx="993.8" cy="31.8" r="1.6"/></g></g><path d="M488,86.6 h14.4 l-7.2,7z" fill="none" stroke="#2c2c2c" stroke-width="1.3"/><rect x="39.3" y="60.6" width="31.5" height="23.4" rx="1.5" fill="none" stroke="#9fd7fb" stroke-width="1.7"/><rect x="39" y="60.3" width="13.6" height="24" fill="#9fd7fb"/><path d="M48.5,68.8 v7.2 l-4.6,-3.6z" fill="#5a5a5a"/><path d="M55.3,68.8 v7.2 l4.6,-3.6z" fill="#9fd7fb"/><g fill="#d2d2d6"><rect x="180.3" y="60.3" width="4.6" height="4.4"/><rect x="186.6" y="60.3" width="13.2" height="4.4"/><rect x="180.3" y="66.4" width="4.6" height="18"/><rect x="186.6" y="66.4" width="13.2" height="18"/></g><path d="M203,72.6 h15 M210.5,65.2 v14.8" stroke="#e2e2e2" stroke-width="1.6"/><path d="M261.2,77.2 L271.8,70.4 L282.4,77.2 L271.8,84z" fill="none" stroke="#d2d2d6" stroke-width="1.5"/><path d="M260.3,67.6 L271.8,61 L283.3,67.6 L271.8,74.4z" fill="#d2d2d6"/><path d="M283,72.6 h15 M290.5,65.2 v14.8" stroke="#e2e2e2" stroke-width="1.6"/><g fill="none" stroke="#d2d2d6" stroke-width="1.5"><path d="M347.5,71.3 L340.8,76 L351.8,83.3 L362.8,76 L356,71.3"/><path d="M351.8,77.5 V62.2 M347.6,66 L351.8,61.6 L356,66"/></g><path d="M363.2,72.6 h15 M370.7,65.2 v14.8" stroke="#e2e2e2" stroke-width="1.6"/><path d="M552.9,60.1 V81.3 L557.7,76.9 L561.6,85 L565.2,83.3 L561.4,75.6 L569.8,73.4z" fill="#48484a"/><g fill="none" stroke="#fff" stroke-width="1.6"><rect x="595.2" y="60.9" width="14.4" height="14.4"/><circle cx="610.4" cy="75.4" r="8.8"/></g><circle cx="646.5" cy="63.6" r="3.3" fill="none" stroke="#fff" stroke-width="1.5"/><path d="M649,66.1 L661,78.5" stroke="#fff" stroke-width="1.6"/><path d="M668,85.2 L656.9,81.4 L664.4,74.8z" fill="#fff"/><g fill="none" stroke="#fff" stroke-width="1.5"><path d="M738.8,84.4 H763.4 C761,74 756,62.4 751,62.4 C746,62.4 741.2,74 738.8,84.4z"/><path d="M742.8,61.6 H759.2"/><circle cx="741" cy="61.6" r="1.8"/><circle cx="761" cy="61.6" r="1.8"/></g><circle cx="751" cy="61.6" r="2.1" fill="#fff"/><g fill="none" stroke="#fff" stroke-width="1.5"><path d="M790.6,63.9 H808.3"/><circle cx="788.8" cy="63.9" r="1.8"/><circle cx="810.1" cy="63.9" r="1.8"/><path d="M796.2,65.5 V84.2 L801,79 L811,78.6z" stroke-linejoin="miter"/></g><path d="M796.2,61.4 l2.5,2.5 l-2.5,2.5 l-2.5,-2.5z" fill="#6a6a6c" stroke="#fff" stroke-width="1.2"/><g stroke="#fff" stroke-width="1.6"><path d="M841.4,60.9 V85.2 M852.9,59.8 V83.8 M834.4,66.9 H855 M856.5,66.9 H858.9 M836,78.1 H838 M839.5,78.1 H860"/></g><path d="M893.8,63.9 L884.6,72.4 L893.8,80.9" fill="none" stroke="#fff" stroke-width="1.8"/><g fill="none" stroke="#fff" stroke-width="1.6"><rect x="926.4" y="60.6" width="8" height="8"/><rect x="918.6" y="76.2" width="8" height="8"/><rect x="934.4" y="76.2" width="8" height="8"/><path d="M928.4,68.8 L923.6,76 M932.4,68.8 L937.4,76"/></g><g fill="none" stroke="#fff" stroke-width="1.6" stroke-linejoin="round"><path d="M990.6,60.5 L983.6,67.5"/><path d="M976.2,66.6 L984.6,75 a3,3 0 0 0 0.8,-4.6 l-4.4,-4.4 a3,3 0 0 0 -4.8,0.6z"/><path d="M976.2,66.6 C973,71 970,72.5 966.6,72.7 L975,84 L984.6,75"/></g><path d="M990.4,84.4 h6.6 l-3.3,3.5z" fill="#4c4c4e"/><g fill="none" stroke="#fff" stroke-width="1.5" stroke-linejoin="round"><path d="M1026.6,69.6 C1023,64 1023.6,59 1026.6,59 C1029.6,59 1030.2,64 1026.6,69.6z"/><path d="M1015.5,70.5 H1037.8 a1.6,1.6 0 0 1 1.6,1.6 V76 a4,4 0 0 1 -4,4 H1032 L1026.6,73.4 L1021.2,80 H1017.8 a4,4 0 0 1 -4,-4 V72 a1.6,1.6 0 0 1 1.7,-1.5z"/><path d="M1014,73.8 H1039.4"/><path d="M1024.6,80.3 l2,-2.2 l2,2.2"/></g><path d="M1038.4,84.4 h6.6 l-3.3,3.5z" fill="#4c4c4e"/><g fill="none" stroke="#fff" stroke-width="1.6"><path d="M1063.6,84.6 V70.8 a10.8,10.8 0 0 1 21.6,0 V84.6 H1079 V70.8 a4.6,4.6 0 0 0 -9.2,0 V84.6z"/><path d="M1063.6,80.4 h6.2 M1079,80.4 h6.2"/></g><g fill="none" stroke="#fff" stroke-width="1.5"><circle cx="1118.3" cy="68.9" r="8.1"/><path d="M1113.8,68.9 h9 M1118.3,64.4 v9"/><path d="M1124,74.8 L1133.6,84.6 a1.2,1.2 0 0 0 1.8,-1.7 L1125.6,73.2"/></g><g transform="translate(1171,0) scale(1.09,1) translate(-1169,0)" fill="none" stroke="#fff" stroke-width="1.5" stroke-linejoin="round" stroke-linecap="round"><path d="M1163.6,70.3 V63.4 a1.9,1.9 0 0 1 3.8,0 V61.8 a1.9,1.9 0 0 1 3.8,0 V63 a1.9,1.9 0 0 1 3.8,0 V66.5 a1.9,1.9 0 0 1 3.8,0 V75 C1178.8,78 1177.4,81 1176.2,84.6 H1164.6 C1162.6,80.6 1160,76.6 1157.6,73.6 C1156.4,71.6 1158.6,69.8 1160.6,71.6 L1163.6,74.6"/><path d="M1167.4,63.4 V70 M1171.2,62.4 V70 M1175,64 V70.4"/></g><g transform="translate(1218.4,0) scale(1.09,1) translate(-1216,0)" fill="none" stroke="#fff" stroke-width="1.5" stroke-linejoin="round" stroke-linecap="round"><path d="M1211.8,74.5 V62 a2,2 0 0 1 4,0 V69.2 a1.9,1.9 0 0 1 3.8,0 V70 a1.9,1.9 0 0 1 3.8,0 V70.8 a1.9,1.9 0 0 1 3.8,0 V76 C1227.2,79 1225.6,81.6 1224.4,84.6 H1212.8 C1210.8,81 1208.2,77.4 1205.8,74.6 C1204.6,72.6 1206.8,70.8 1208.8,72.6 L1211.8,75.6"/></g><g fill="none" stroke="#8ef264" stroke-width="1.5"><rect x="1348.9" y="69.9" width="14.7" height="14.5"/><rect x="1344.1" y="64.9" width="14.7" height="14.5" fill="#6c6c6c"/></g><rect x="1338.8" y="59.6" width="16.1" height="15.8" fill="#8ef264"/><rect x="1428.2" y="69.2" width="16.1" height="15.8" fill="#8ef264"/><g fill="#6c6c6c" stroke="#8ef264" stroke-width="1.5"><rect x="1424" y="64.9" width="14.7" height="14.5"/><rect x="1419.4" y="60.3" width="14.7" height="14.5"/></g><rect x="1502.2" y="70.9" width="19" height="14.4" fill="#f3d58a"/><path d="M1505.6,71 V66.6 a6.1,6.1 0 0 1 12.2,0 V71" fill="none" stroke="#f3d58a" stroke-width="1.9"/><g fill="none" stroke="#a2a2a2" stroke-width="1.3"><rect x="1581" y="62.2" width="21" height="20.6"/></g><rect x="1583.6" y="64.9" width="9.4" height="9.2" fill="#84b474"/><circle cx="1594.8" cy="76" r="3.6" fill="none" stroke="#84b474" stroke-width="1.4"/><rect x="1579.1" y="60.300000000000004" width="3.8" height="3.8" fill="#6c6c6c" stroke="#a2a2a2" stroke-width="1.1"/><rect x="1600.1" y="60.300000000000004" width="3.8" height="3.8" fill="#6c6c6c" stroke="#a2a2a2" stroke-width="1.1"/><rect x="1579.1" y="80.89999999999999" width="3.8" height="3.8" fill="#6c6c6c" stroke="#a2a2a2" stroke-width="1.1"/><rect x="1600.1" y="80.89999999999999" width="3.8" height="3.8" fill="#6c6c6c" stroke="#a2a2a2" stroke-width="1.1"/><rect x="2190" y="59.5" width="26.1" height="25.7" rx="4.2" fill="#8cf55f"/><rect x="2195" y="64.7" width="5.8" height="5.6" fill="#6a6a6a"/><rect x="2195" y="74.5" width="5.8" height="5.6" fill="#6a6a6a"/><rect x="2205.2" y="64.7" width="5.8" height="5.6" fill="#6a6a6a"/><rect x="2205.2" y="74.5" width="5.8" height="5.6" fill="#6a6a6a"/><circle cx="2282.9" cy="72.4" r="13.6" fill="#a4d8fa"/><circle cx="2284.4" cy="64" r="1.9" fill="#5e5e60"/><path d="M2279,72 C2281.5,69.6 2284.6,69.4 2284.2,71.6 L2282,78.6 C2281.6,80 2283,79.6 2285.2,77.6" fill="none" stroke="#5e5e60" stroke-width="2.3" stroke-linecap="round"/></svg></div></div><div id="edge"></div></body></html>
